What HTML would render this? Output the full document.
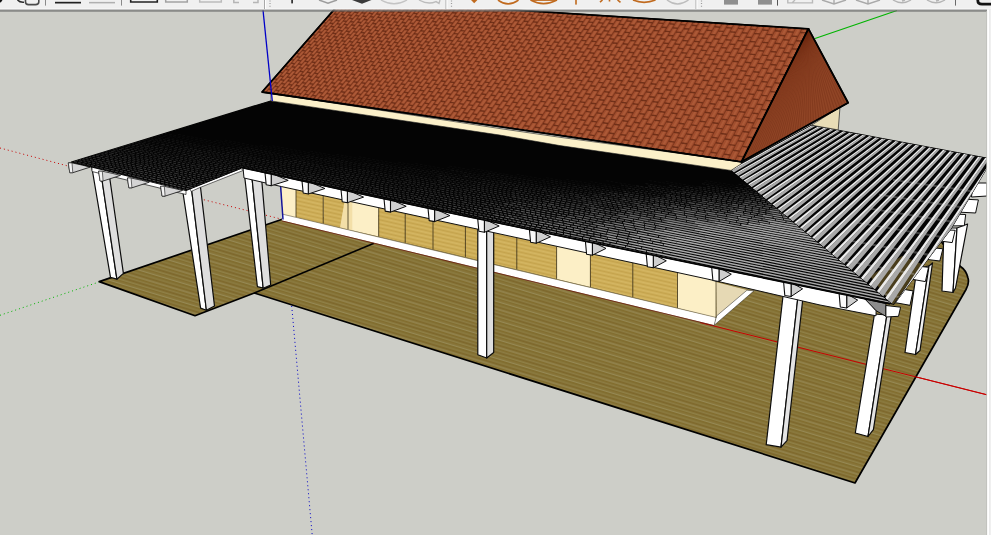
<!DOCTYPE html>
<html lang="en">
<head>
<meta charset="utf-8">
<title>SketchUp - pavilion model</title>
<style>
html,body{margin:0;padding:0;background:#cdcec8;overflow:hidden;font-family:"Liberation Sans",sans-serif;}
#view{display:block;width:991px;height:535px;}
</style>
</head>
<body>
<svg id="view" width="991" height="535" viewBox="0 0 991 535" shape-rendering="geometricPrecision">
<defs>
<pattern id="deck" width="60" height="19" patternUnits="userSpaceOnUse" patternTransform="matrix(1 0.30 0 1 0 0)"><rect width="60" height="19" fill="#867336"/><rect y="0" width="60" height="1" fill="#968955"/><rect y="1.4" width="60" height="1.1" fill="#7f6a2b"/><rect y="3.6" width="60" height="0.8" fill="#8e7f47"/><rect y="5.2" width="60" height="1.2" fill="#7d672a"/><rect y="7.5" width="60" height="1.0" fill="#9a8d5c"/><rect y="9" width="60" height="0.9" fill="#826c2d"/><rect y="11" width="60" height="0.8" fill="#8f8048"/><rect y="12.6" width="60" height="1.3" fill="#7c662a"/><rect y="14.8" width="60" height="0.9" fill="#93854f"/><rect y="16.4" width="60" height="1.0" fill="#806a2c"/><rect y="17.8" width="60" height="0.7" fill="#8c7c44"/></pattern>
<pattern id="wood" width="40" height="4" patternUnits="userSpaceOnUse" patternTransform="matrix(1 0.23 0 1 0 0)"><rect width="40" height="4" fill="#ceae58"/><rect y="0" width="40" height="0.8" fill="#c2a04a"/><rect y="2" width="40" height="0.8" fill="#d6b866"/></pattern>
</defs>
<rect x="0" y="0" width="991" height="535" fill="#cdcec8"/>
<line x1="0.0" y1="148.0" x2="68.0" y2="166.0" stroke="#c80000" stroke-width="1" stroke-dasharray="1 3"/>
<line x1="200.0" y1="198.8" x2="283.0" y2="219.5" stroke="#c80000" stroke-width="1" stroke-dasharray="1 3"/>
<line x1="0.0" y1="315.3" x2="99.0" y2="282.0" stroke="#00b400" stroke-width="1" stroke-dasharray="1 3"/>
<line x1="291.7" y1="306.0" x2="312.2" y2="535.0" stroke="#0000c8" stroke-width="1" stroke-dasharray="1 3"/>
<line x1="815.0" y1="38.5" x2="897.0" y2="10.5" stroke="#00b400" stroke-width="1.2" />
<line x1="700.0" y1="322.5" x2="987.0" y2="394.8" stroke="#c80000" stroke-width="1.0" />
<path d="M99.2,281.6 L195.0,315.7 L254.3,293.0 L855.0,483.0 L966,289.5 Q969.5,283 968,278 Q966,270 960.5,266.5 L940,240 L900,200 L283,219 Z" fill="url(#deck)" stroke="#000" stroke-width="1.7" stroke-linejoin="round"/>
<line x1="254.3" y1="293.0" x2="374.0" y2="243.3" stroke="#000" stroke-width="1.6" />
<line x1="700.0" y1="322.5" x2="987.0" y2="394.8" stroke="#c80000" stroke-width="1.0" />
<polygon points="281.6,178.9 296.0,182.1 296.0,217.4 281.6,214.0" fill="#fcefc6" stroke="none" stroke-width="1" stroke-linejoin="round" />
<polygon points="296.0,182.1 323.2,188.1 323.2,223.7 296.0,217.4" fill="url(#wood)" stroke="none" stroke-width="1" stroke-linejoin="round" />
<polygon points="323.2,188.1 348.0,193.6 348.0,229.5 323.2,223.7" fill="url(#wood)" stroke="none" stroke-width="1" stroke-linejoin="round" />
<polygon points="348.0,193.6 378.7,200.1 378.7,236.6 348.0,229.5" fill="#fcefc6" stroke="none" stroke-width="1" stroke-linejoin="round" />
<polygon points="378.7,200.1 405.2,205.8 405.2,242.8 378.7,236.6" fill="url(#wood)" stroke="none" stroke-width="1" stroke-linejoin="round" />
<polygon points="405.2,205.8 433.0,211.7 433.0,249.3 405.2,242.8" fill="url(#wood)" stroke="none" stroke-width="1" stroke-linejoin="round" />
<polygon points="433.0,211.7 465.4,218.6 465.4,256.9 433.0,249.3" fill="url(#wood)" stroke="none" stroke-width="1" stroke-linejoin="round" />
<polygon points="465.4,218.6 516.8,229.4 516.8,269.3 465.4,256.9" fill="url(#wood)" stroke="none" stroke-width="1" stroke-linejoin="round" />
<polygon points="516.8,229.4 556.6,237.7 556.6,278.9 516.8,269.3" fill="url(#wood)" stroke="none" stroke-width="1" stroke-linejoin="round" />
<polygon points="556.6,237.7 590.4,244.8 590.4,287.1 556.6,278.9" fill="#fcefc6" stroke="none" stroke-width="1" stroke-linejoin="round" />
<polygon points="590.4,244.8 632.8,253.5 632.8,297.3 590.4,287.1" fill="url(#wood)" stroke="none" stroke-width="1" stroke-linejoin="round" />
<polygon points="632.8,253.5 677.5,262.7 677.5,308.1 632.8,297.3" fill="url(#wood)" stroke="none" stroke-width="1" stroke-linejoin="round" />
<polygon points="677.5,262.7 716.0,270.6 716.0,317.4 677.5,308.1" fill="#fcefc6" stroke="none" stroke-width="1" stroke-linejoin="round" />
<polygon points="344.7,200.3 352.3,201.9 352.3,230.5 340.0,227.6" fill="#f3dfa8" stroke="none" stroke-width="1" stroke-linejoin="round" />
<line x1="296.0" y1="189.7" x2="296.0" y2="217.4" stroke="#3a3018" stroke-width="0.8" />
<line x1="323.2" y1="195.6" x2="323.2" y2="223.7" stroke="#3a3018" stroke-width="0.8" />
<line x1="348.0" y1="201.0" x2="348.0" y2="229.5" stroke="#3a3018" stroke-width="0.8" />
<line x1="378.7" y1="207.7" x2="378.7" y2="236.6" stroke="#3a3018" stroke-width="0.8" />
<line x1="405.2" y1="213.4" x2="405.2" y2="242.8" stroke="#3a3018" stroke-width="0.8" />
<line x1="433.0" y1="219.4" x2="433.0" y2="249.3" stroke="#3a3018" stroke-width="0.8" />
<line x1="465.4" y1="226.5" x2="465.4" y2="256.9" stroke="#3a3018" stroke-width="0.8" />
<line x1="516.8" y1="237.6" x2="516.8" y2="269.3" stroke="#3a3018" stroke-width="0.8" />
<line x1="556.6" y1="246.3" x2="556.6" y2="278.9" stroke="#3a3018" stroke-width="0.8" />
<line x1="590.4" y1="253.6" x2="590.4" y2="287.1" stroke="#3a3018" stroke-width="0.8" />
<line x1="632.8" y1="262.8" x2="632.8" y2="297.3" stroke="#3a3018" stroke-width="0.8" />
<line x1="677.5" y1="272.5" x2="677.5" y2="308.1" stroke="#3a3018" stroke-width="0.8" />
<polygon points="281.9,214.1 716.0,317.4 714.2,325.2 281.9,220.4" fill="#ffffff" stroke="none" stroke-width="1" stroke-linejoin="round" />
<line x1="281.9" y1="220.9" x2="714.2" y2="325.6" stroke="#6a1a12" stroke-width="0.8" />
<line x1="281.9" y1="214.0" x2="716.0" y2="317.4" stroke="#6b6248" stroke-width="0.6" />
<line x1="280.6" y1="186.0" x2="283.0" y2="219.5" stroke="#14149a" stroke-width="1.5" />
<polygon points="716.0,282.0 748.0,290.3 716.5,317.0" fill="#e6d9b4" stroke="none" stroke-width="1" stroke-linejoin="round" />
<polygon points="714.2,325.2 716.5,316.0 747.0,290.2 754.0,290.8" fill="#ffffff" stroke="#222" stroke-width="0.5" stroke-linejoin="round" />
<line x1="716.0" y1="281.0" x2="716.0" y2="318.0" stroke="#54492c" stroke-width="0.8" />
<polygon points="944.0,228.0 957.0,228.0 953.0,292.5 942.0,291.0" fill="#ffffff" stroke="#0c0c0c" stroke-width="1.2" stroke-linejoin="round" />
<polygon points="957.0,228.0 967.6,224.0 955.5,288.0 953.0,292.5" fill="#ffffff" stroke="#0c0c0c" stroke-width="1.2" stroke-linejoin="round" />
<polygon points="917.0,268.0 929.0,266.0 915.5,354.5 905.0,352.5" fill="#ffffff" stroke="#0c0c0c" stroke-width="1.2" stroke-linejoin="round" />
<polygon points="929.0,266.0 932.5,263.0 920.0,350.5 915.5,354.5" fill="#f2f2f2" stroke="#0c0c0c" stroke-width="1.2" stroke-linejoin="round" />
<polygon points="91.6,166.0 100.5,170.0 116.9,279.2 110.5,277.4" fill="#ffffff" stroke="#0c0c0c" stroke-width="1.2" stroke-linejoin="round" />
<polygon points="100.5,170.0 109.3,175.0 123.4,273.4 116.9,279.2" fill="#dedede" stroke="#0c0c0c" stroke-width="1.2" stroke-linejoin="round" />
<polygon points="182.4,189.0 191.3,187.0 206.4,310.2 200.6,308.1" fill="#ffffff" stroke="#0c0c0c" stroke-width="1.2" stroke-linejoin="round" />
<polygon points="191.3,187.0 200.0,183.0 214.5,306.0 206.4,310.2" fill="#dedede" stroke="#0c0c0c" stroke-width="1.2" stroke-linejoin="round" />
<polygon points="243.8,169.0 251.4,172.0 263.2,288.2 257.4,286.7" fill="#ffffff" stroke="#0c0c0c" stroke-width="1.2" stroke-linejoin="round" />
<polygon points="251.4,172.0 261.4,176.0 270.7,285.0 263.2,288.2" fill="#dedede" stroke="#0c0c0c" stroke-width="1.2" stroke-linejoin="round" />
<polygon points="477.8,220.0 486.7,222.0 486.7,358.0 477.8,354.7" fill="#ffffff" stroke="#0c0c0c" stroke-width="1.2" stroke-linejoin="round" />
<polygon points="486.7,222.0 493.7,222.0 493.7,352.5 486.7,358.0" fill="#dedede" stroke="#0c0c0c" stroke-width="1.2" stroke-linejoin="round" />
<polygon points="783.0,296.0 797.8,298.0 781.0,447.2 766.2,444.7" fill="#ffffff" stroke="#0c0c0c" stroke-width="1.2" stroke-linejoin="round" />
<polygon points="797.8,298.0 802.9,298.0 787.0,440.7 781.0,447.2" fill="#e4e4e4" stroke="#0c0c0c" stroke-width="1.2" stroke-linejoin="round" />
<polygon points="874.5,314.0 886.9,315.0 868.0,436.5 855.3,433.0" fill="#ffffff" stroke="#0c0c0c" stroke-width="1.2" stroke-linejoin="round" />
<polygon points="886.9,315.0 891.3,315.0 873.4,429.6 868.0,436.5" fill="#e4e4e4" stroke="#0c0c0c" stroke-width="1.2" stroke-linejoin="round" />
<polygon points="92.0,166.0 186.0,189.0 186.0,194.5 92.0,171.5" fill="#ffffff" stroke="#111" stroke-width="0.7" stroke-linejoin="round" />
<polygon points="190.0,188.5 241.0,168.5 243.0,170.5 200.0,187.5 191.0,191.5" fill="#ffffff" stroke="#111" stroke-width="0.6" stroke-linejoin="round" />
<polygon points="243.0,167.9 350.0,191.5 460.0,215.0 586.0,241.4 710.0,266.9 866.0,299.0 876.1,310.7 876.0,315.8 820.0,305.0 710.0,279.6 460.0,225.3 281.6,186.6 244.0,178.0" fill="#ffffff" stroke="#111" stroke-width="1.0" stroke-linejoin="round" />
<polygon points="68.3,162.9 69.8,172.7 72.8,172.7 90.2,167.1 82.6,165.2 72.0,162.9" fill="#d4d4d4" stroke="#111" stroke-width="0.8" stroke-linejoin="round" />
<polygon points="68.3,162.9 69.8,172.7 72.8,172.7 72.0,162.9" fill="#f4f4f4" stroke="#111" stroke-width="0.6" stroke-linejoin="round" />
<polygon points="98.6,171.2 100.1,181.0 103.1,181.0 120.5,175.4 112.9,173.5 102.3,171.2" fill="#d4d4d4" stroke="#111" stroke-width="0.8" stroke-linejoin="round" />
<polygon points="98.6,171.2 100.1,181.0 103.1,181.0 102.3,171.2" fill="#f4f4f4" stroke="#111" stroke-width="0.6" stroke-linejoin="round" />
<polygon points="127.4,178.0 128.9,187.8 131.9,187.8 149.3,182.2 141.7,180.3 131.1,178.0" fill="#d4d4d4" stroke="#111" stroke-width="0.8" stroke-linejoin="round" />
<polygon points="127.4,178.0 128.9,187.8 131.9,187.8 131.1,178.0" fill="#f4f4f4" stroke="#111" stroke-width="0.6" stroke-linejoin="round" />
<polygon points="160.6,186.3 162.1,196.1 165.1,196.1 182.5,190.5 174.9,188.6 164.3,186.3" fill="#d4d4d4" stroke="#111" stroke-width="0.8" stroke-linejoin="round" />
<polygon points="160.6,186.3 162.1,196.1 165.1,196.1 164.3,186.3" fill="#f4f4f4" stroke="#111" stroke-width="0.6" stroke-linejoin="round" />
<polygon points="271.2,173.2 288.2,180.4 271.2,185.7" fill="#cfcfcf" stroke="#0c0c0c" stroke-width="1.0" stroke-linejoin="round" />
<polygon points="265.0,172.7 271.2,173.7 271.2,185.7 266.2,184.7" fill="#fafafa" stroke="#0c0c0c" stroke-width="1.1" stroke-linejoin="round" />
<polygon points="308.3,181.4 324.9,188.5 308.3,194.0" fill="#cfcfcf" stroke="#0c0c0c" stroke-width="1.0" stroke-linejoin="round" />
<polygon points="302.0,180.9 308.3,181.9 308.3,194.0 303.2,193.0" fill="#fafafa" stroke="#0c0c0c" stroke-width="1.1" stroke-linejoin="round" />
<polygon points="347.4,190.0 363.6,197.1 347.4,202.7" fill="#cfcfcf" stroke="#0c0c0c" stroke-width="1.0" stroke-linejoin="round" />
<polygon points="341.0,189.5 347.4,190.5 347.4,202.7 342.2,201.7" fill="#fafafa" stroke="#0c0c0c" stroke-width="1.1" stroke-linejoin="round" />
<polygon points="390.5,199.3 406.2,206.3 390.5,212.1" fill="#cfcfcf" stroke="#0c0c0c" stroke-width="1.0" stroke-linejoin="round" />
<polygon points="384.0,198.8 390.5,199.8 390.5,212.1 385.2,211.1" fill="#fafafa" stroke="#0c0c0c" stroke-width="1.1" stroke-linejoin="round" />
<polygon points="434.6,208.7 449.9,215.6 434.6,221.6" fill="#cfcfcf" stroke="#0c0c0c" stroke-width="1.0" stroke-linejoin="round" />
<polygon points="428.0,208.2 434.6,209.2 434.6,221.6 429.2,220.6" fill="#fafafa" stroke="#0c0c0c" stroke-width="1.1" stroke-linejoin="round" />
<polygon points="484.4,219.2 499.2,226.0 484.4,232.3" fill="#cfcfcf" stroke="#0c0c0c" stroke-width="1.0" stroke-linejoin="round" />
<polygon points="477.7,218.7 484.4,219.7 484.4,232.3 478.9,231.3" fill="#fafafa" stroke="#0c0c0c" stroke-width="1.1" stroke-linejoin="round" />
<polygon points="536.2,230.0 550.5,236.8 536.2,243.3" fill="#cfcfcf" stroke="#0c0c0c" stroke-width="1.0" stroke-linejoin="round" />
<polygon points="529.4,229.5 536.2,230.5 536.2,243.3 530.6,242.3" fill="#fafafa" stroke="#0c0c0c" stroke-width="1.1" stroke-linejoin="round" />
<polygon points="592.4,241.8 606.0,248.4 592.4,255.2" fill="#cfcfcf" stroke="#0c0c0c" stroke-width="1.0" stroke-linejoin="round" />
<polygon points="585.4,241.3 592.4,242.3 592.4,255.2 586.6,254.2" fill="#fafafa" stroke="#0c0c0c" stroke-width="1.1" stroke-linejoin="round" />
<polygon points="653.3,254.3 666.3,260.8 653.3,267.8" fill="#cfcfcf" stroke="#0c0c0c" stroke-width="1.0" stroke-linejoin="round" />
<polygon points="646.2,253.8 653.3,254.8 653.3,267.8 647.4,266.8" fill="#fafafa" stroke="#0c0c0c" stroke-width="1.1" stroke-linejoin="round" />
<polygon points="719.0,267.7 731.3,274.2 719.0,281.5" fill="#cfcfcf" stroke="#0c0c0c" stroke-width="1.0" stroke-linejoin="round" />
<polygon points="711.7,267.2 719.0,268.2 719.0,281.5 712.9,280.5" fill="#fafafa" stroke="#0c0c0c" stroke-width="1.1" stroke-linejoin="round" />
<polygon points="791.1,282.5 802.6,288.8 791.1,296.5" fill="#cfcfcf" stroke="#0c0c0c" stroke-width="1.0" stroke-linejoin="round" />
<polygon points="783.6,282.0 791.1,283.0 791.1,296.5 784.8,295.5" fill="#fafafa" stroke="#0c0c0c" stroke-width="1.1" stroke-linejoin="round" />
<polygon points="846.7,293.9 857.7,300.1 846.7,308.0" fill="#cfcfcf" stroke="#0c0c0c" stroke-width="1.0" stroke-linejoin="round" />
<polygon points="839.1,293.4 846.7,294.4 846.7,308.0 840.3,307.0" fill="#fafafa" stroke="#0c0c0c" stroke-width="1.1" stroke-linejoin="round" />
<polygon points="864.9,299.0 885.9,303.5 885.9,316.3 876.1,310.7" fill="#8c8c8c" stroke="#0c0c0c" stroke-width="1.0" stroke-linejoin="round" />
<polygon points="885.9,305.5 900.6,307.2 898.5,316.3 885.9,317.0" fill="#ffffff" stroke="#0c0c0c" stroke-width="1.0" stroke-linejoin="round" />
<polygon points="973.0,183.0 987.0,183.0 987.0,196.0 971.5,197.0" fill="#ffffff" stroke="#0c0c0c" stroke-width="1.0" stroke-linejoin="round" />
<polygon points="959.4,198.9 978.4,199.9 975.6,213.0 956.6,212.0" fill="#ffffff" stroke="#0c0c0c" stroke-width="1.0" stroke-linejoin="round" />
<polygon points="949.5,214.0 965.7,214.5 964.3,225.7 948.1,226.0" fill="#ffffff" stroke="#0c0c0c" stroke-width="1.0" stroke-linejoin="round" />
<polygon points="935.9,229.3 955.2,230.3 952.2,242.6 936.9,240.6" fill="#ffffff" stroke="#0c0c0c" stroke-width="1.0" stroke-linejoin="round" />
<polygon points="924.6,246.8 942.9,248.8 939.8,261.0 923.5,259.0" fill="#ffffff" stroke="#0c0c0c" stroke-width="1.0" stroke-linejoin="round" />
<polygon points="910.2,265.3 928.5,267.3 925.4,281.6 908.1,278.6" fill="#ffffff" stroke="#0c0c0c" stroke-width="1.0" stroke-linejoin="round" />
<polygon points="894.8,287.9 913.1,290.9 910.0,305.3 892.7,302.2" fill="#ffffff" stroke="#0c0c0c" stroke-width="1.0" stroke-linejoin="round" />
<clipPath id="cpMain"><polygon points="71.4,162.0 270.7,101.0 271.4,100.8 500.0,134.9 560.0,145.4 730.5,170.0 731.5,170.6 892.0,303.8 710.0,266.4 586.0,240.9 460.0,214.5 350.0,191.0 240.5,166.8 240.5,168.5 186.0,190.5"/></clipPath>
<polygon points="71.4,162.0 270.7,101.0 271.4,100.8 500.0,134.9 560.0,145.4 730.5,170.0 731.5,170.6 892.0,303.8 710.0,266.4 586.0,240.9 460.0,214.5 350.0,191.0 240.5,166.8 240.5,168.5 186.0,190.5" fill="#040404" stroke="#040404" stroke-width="1.2" stroke-linejoin="round" />
<g clip-path="url(#cpMain)" fill="none">
<path d="M743.9,181.4L778.6,186.9M740.6,182.7L771.7,187.6M705.5,180.7L746.3,187.2M703.7,182.2L735.4,187.3M665.8,181.5L698.7,186.9M649.2,180.6L685.8,186.6M606.2,180.7L636.2,185.8M590.3,181.6L627.8,188.1M566.4,179.4L604.2,185.9M546.1,177.7L587.8,185.0M516.6,174.4L550.7,180.4M472.6,168.4L505.8,174.3M505.8,174.3L541.9,180.7M449.2,166.0L488.1,173.0M447.4,167.5L482.4,173.8M415.4,163.5L451.1,170.0M398.2,162.1L429.7,167.9M429.7,167.9L462.7,173.9M358.8,156.7L396.9,163.7M396.9,163.7L431.9,170.1M336.3,154.3L369.0,160.3M369.0,160.3L404.0,166.8M310.2,151.1L344.2,157.5M344.2,157.5L376.2,163.4M272.4,145.8L302.9,151.5M302.9,151.5L333.3,157.2M333.3,157.2L364.1,163.0M260.2,145.1L294.9,151.7M294.9,151.7L327.9,157.9M224.6,140.0L265.2,147.8M265.2,147.8L307.0,155.7M215.6,140.0L256.2,147.7M256.2,147.7L293.1,154.8M178.0,134.3L213.4,141.2M213.4,141.2L246.5,147.6M164.7,133.4L201.3,140.5M201.3,140.5L238.9,147.8M160.1,134.1L195.6,141.0M195.6,141.0L227.5,147.3M132.4,130.2L167.1,137.1M167.1,137.1L207.9,145.1M98.7,125.1L130.1,131.4M130.1,131.4L167.3,138.8M92.0,125.4L128.1,132.6M128.1,132.6L158.6,138.7M72.8,123.0L103.6,129.3M103.6,129.3L137.8,136.2M37.1,117.3L71.4,124.3M71.4,124.3L111.9,132.6M36.1,118.7L69.9,125.6M69.9,125.6L99.9,131.7M56.6,124.4L94.2,132.2" stroke="#d2d2d2" stroke-opacity="0.04" stroke-width="1.0" stroke-dasharray="3 1.4"/>
<path d="M816.4,185.5L849.8,190.6M849.8,190.6L881.6,195.5M798.2,184.5L836.9,190.5M788.5,184.8L826.3,190.7M738.5,184.2L780.3,190.8M701.9,183.7L737.4,189.5M645.5,183.6L681.5,189.6M620.9,185.0L651.4,190.2M604.2,185.9L635.1,191.3M587.8,185.0L623.2,191.1M550.7,180.4L584.5,186.3M541.9,180.7L574.2,186.4M488.1,173.0L529.8,180.4M529.8,180.4L562.9,186.3M482.4,173.8L517.4,180.1M517.4,180.1L553.7,186.6M451.1,170.0L488.1,176.7M488.1,176.7L518.1,182.1M462.7,173.9L500.3,180.8M431.9,170.1L465.0,176.2M404.0,166.8L442.0,173.8M442.0,173.8L483.4,181.5M376.2,163.4L406.3,169.0M406.3,169.0L439.6,175.2M364.1,163.0L405.1,170.7M405.1,170.7L438.2,176.9M327.9,157.9L363.0,164.6M363.0,164.6L399.0,171.3M399.0,171.3L440.1,179.1M307.0,155.7L340.2,162.0M340.2,162.0L371.2,167.9M371.2,167.9L402.4,173.9M293.1,154.8L327.0,161.3M327.0,161.3L361.8,168.0M361.8,168.0L403.7,176.0M246.5,147.6L285.8,155.2M285.8,155.2L327.2,163.2M327.2,163.2L358.5,169.2M238.9,147.8L270.0,153.9M270.0,153.9L302.0,160.1M302.0,160.1L340.3,167.5M227.5,147.3L257.7,153.2M257.7,153.2L294.3,160.4M207.9,145.1L245.4,152.5M245.4,152.5L285.3,160.4M167.3,138.8L203.9,146.1M203.9,146.1L241.4,153.5M241.4,153.5L275.1,160.2M158.6,138.7L196.3,146.2M196.3,146.2L227.2,152.4M137.8,136.2L176.9,144.0M176.9,144.0L208.8,150.5M111.9,132.6L148.5,140.0M148.5,140.0L185.5,147.5M99.9,131.7L130.3,138.0M130.3,138.0L162.1,144.5M94.2,132.2L134.7,140.5M134.7,140.5L174.1,148.7M54.9,125.6L87.3,132.4M87.3,132.4L124.6,140.1M35.0,123.1L75.1,131.5M75.1,131.5L113.7,139.6M35.1,124.7L73.0,132.7M73.0,132.7L114.8,141.5M33.5,125.9L64.3,132.5M44.7,129.9L75.0,136.4M24.8,127.3L54.8,133.8" stroke="#d2d2d2" stroke-opacity="0.08" stroke-width="1.0" stroke-dasharray="3 1.4"/>
<path d="M881.6,195.5L913.0,200.3M836.9,190.5L870.4,195.6M870.4,195.6L912.1,202.0M787.6,186.5L828.2,192.8M778.6,186.9L813.4,192.3M771.7,187.6L802.9,192.5M746.3,187.2L786.4,193.6M735.4,187.3L775.3,193.7M707.4,186.5L743.5,192.3M698.7,186.9L729.6,192.0M685.8,186.6L721.1,192.4M669.4,185.7L704.5,191.6M648.2,185.9L682.4,191.7M636.2,185.8L670.8,191.6M627.8,188.1L665.9,194.7M584.5,186.3L624.6,193.4M574.2,186.4L608.7,192.5M562.9,186.3L600.8,193.1M553.7,186.6L588.2,192.8M518.1,182.1L552.8,188.4M500.3,180.8L538.7,187.8M465.0,176.2L503.0,183.2M483.4,181.5L515.1,187.3M439.6,175.2L473.8,181.6M438.2,176.9L477.2,184.2M440.1,179.1L472.3,185.2M402.4,173.9L438.4,180.7M403.7,176.0L439.8,182.9M358.5,169.2L395.6,176.4M395.6,176.4L433.0,183.6M340.3,167.5L375.3,174.3M375.3,174.3L408.7,180.8M294.3,160.4L332.0,167.8M332.0,167.8L372.9,175.8M372.9,175.8L404.0,181.9M285.3,160.4L317.2,166.7M317.2,166.7L356.6,174.5M356.6,174.5L389.3,180.9M275.1,160.2L310.1,167.2M310.1,167.2L347.1,174.5M227.2,152.4L266.0,160.2M266.0,160.2L305.4,168.1M305.4,168.1L341.5,175.3M208.8,150.5L249.5,158.7M249.5,158.7L282.8,165.4M282.8,165.4L322.6,173.5M185.5,147.5L226.1,155.8M226.1,155.8L257.4,162.1M257.4,162.1L299.3,170.7M162.1,144.5L199.5,152.1M199.5,152.1L234.7,159.3M234.7,159.3L270.8,166.7M174.1,148.7L208.9,155.8M208.9,155.8L242.0,162.7M124.6,140.1L160.7,147.6M160.7,147.6L198.4,155.5M113.7,139.6L146.9,146.5M146.9,146.5L183.5,154.2M114.8,141.5L150.4,149.0M150.4,149.0L190.5,157.5M64.3,132.5L101.4,140.4M101.4,140.4L135.7,147.7M135.7,147.7L175.5,156.1M75.0,136.4L108.1,143.5M108.1,143.5L141.5,150.7M54.8,133.8L90.7,141.5M90.7,141.5L126.6,149.3M56.9,135.9L97.6,144.7M55.5,137.3L91.0,145.1M44.3,136.5L76.7,143.7" stroke="#d2d2d2" stroke-opacity="0.12" stroke-width="1.0" stroke-dasharray="3 1.4"/>
<path d="M826.3,190.7L868.2,197.1M868.2,197.1L908.0,203.3M828.2,192.8L869.7,199.2M737.4,189.5L774.4,195.5M681.5,189.6L713.6,195.0M651.4,190.2L691.4,197.1M635.1,191.3L666.9,196.8M623.2,191.1L656.4,197.0M552.8,188.4L593.9,195.8M538.7,187.8L570.1,193.5M503.0,183.2L544.1,190.7M515.1,187.3L549.9,193.7M473.8,181.6L515.3,189.3M477.2,184.2L518.0,191.8M472.3,185.2L511.9,192.7M438.4,180.7L476.9,188.0M439.8,182.9L472.6,189.2M433.0,183.6L465.7,189.9M408.7,180.8L442.3,187.4M404.0,181.9L441.5,189.2M389.3,180.9L424.1,187.8M347.1,174.5L382.2,181.5M382.2,181.5L420.1,189.1M341.5,175.3L372.2,181.5M372.2,181.5L408.2,188.7M322.6,173.5L354.3,179.9M354.3,179.9L390.4,187.1M299.3,170.7L336.8,178.3M336.8,178.3L371.6,185.4M270.8,166.7L311.6,175.1M311.6,175.1L343.1,181.6M242.0,162.7L272.2,168.9M272.2,168.9L309.9,176.7M198.4,155.5L238.1,163.7M238.1,163.7L270.2,170.4M270.2,170.4L303.9,177.4M183.5,154.2L218.7,161.6M218.7,161.6L258.2,169.8M190.5,157.5L228.9,165.6M228.9,165.6L269.2,174.1M175.5,156.1L215.4,164.6M141.5,150.7L180.1,158.9M180.1,158.9L214.5,166.3M126.6,149.3L166.2,157.8M166.2,157.8L198.4,164.8M97.6,144.7L127.9,151.3M127.9,151.3L160.3,158.4M91.0,145.1L131.6,154.0M131.6,154.0L164.5,161.2M76.7,143.7L114.4,152.0M114.4,152.0L145.6,158.9M32.1,135.5L70.5,144.1M70.5,144.1L110.8,153.0M24.9,135.6L55.4,142.4M55.4,142.4L91.9,150.6M45.6,142.0L75.8,148.8M30.5,140.3L70.3,149.4" stroke="#d2d2d2" stroke-opacity="0.16" stroke-width="1.0" stroke-dasharray="3 1.4"/>
<path d="M588.2,192.8L622.2,198.9" stroke="#d2d2d2" stroke-opacity="0.16" stroke-width="1.1" stroke-dasharray="4 1.2"/>
<path d="M869.7,199.2L901.5,204.2M813.4,192.3L844.6,197.2M780.3,190.8L820.6,197.2M704.5,191.6L735.4,196.7M544.1,190.7L576.9,196.7M515.3,189.3L546.8,195.2M518.0,191.8L552.0,198.2M476.9,188.0L512.2,194.8M472.6,189.2L512.3,196.8M465.7,189.9L500.1,196.5M442.3,187.4L483.8,195.4M441.5,189.2L475.9,196.0M424.1,187.8L464.3,195.8M420.1,189.1L455.5,196.1M408.2,188.7L442.7,195.6M390.4,187.1L431.4,195.4M371.6,185.4L411.1,193.4M411.1,193.4L444.3,200.1M343.1,181.6L375.9,188.3M375.9,188.3L413.7,196.0M309.9,176.7L346.7,184.3M346.7,184.3L380.9,191.4M303.9,177.4L337.5,184.4M337.5,184.4L368.1,190.8M258.2,169.8L294.5,177.4M294.5,177.4L327.7,184.4M327.7,184.4L365.4,192.3M269.2,174.1L304.4,181.5M304.4,181.5L343.1,189.7M215.4,164.6L256.1,173.3M256.1,173.3L286.8,179.8M214.5,166.3L248.3,173.6M248.3,173.6L289.9,182.5M198.4,164.8L234.3,172.5M234.3,172.5L268.5,179.9M160.3,158.4L193.5,165.6M193.5,165.6L234.3,174.5M164.5,161.2L196.8,168.3M196.8,168.3L230.4,175.6M145.6,158.9L178.1,166.1M178.1,166.1L212.8,173.7M110.8,153.0L148.9,161.5M148.9,161.5L186.6,169.9M91.9,150.6L123.8,157.8M123.8,157.8L163.2,166.6M75.8,148.8L110.8,156.7M110.8,156.7L145.8,164.7M70.3,149.4L105.9,157.5M105.9,157.5L139.5,165.1M57.9,148.4L97.9,157.5M27.8,143.2L67.3,152.4M67.3,152.4L107.3,161.6M29.7,145.5L64.2,153.5" stroke="#d2d2d2" stroke-opacity="0.20" stroke-width="1.0" stroke-dasharray="3 1.4"/>
<path d="M743.5,192.3L780.2,198.3M729.6,192.0L767.6,198.2M721.1,192.4L751.3,197.4M682.4,191.7L713.1,196.9M670.8,191.6L706.5,197.7M624.6,193.4L654.6,198.6M608.7,192.5L650.2,199.8M600.8,193.1L634.4,199.1M570.1,193.5L600.9,199.1M549.9,193.7L582.4,199.8" stroke="#d2d2d2" stroke-opacity="0.20" stroke-width="1.1" stroke-dasharray="4 1.2"/>
<path d="M844.6,197.2L882.2,203.1M802.9,192.5L837.0,197.9M511.9,192.7L550.8,200.0M512.2,194.8L545.1,201.0M500.1,196.5L531.8,202.7M483.8,195.4L517.5,202.0M475.9,196.0L512.0,203.0M464.3,195.8L504.3,203.6M455.5,196.1L490.8,203.1M442.7,195.6L484.2,203.9M431.4,195.4L463.9,202.0M413.7,196.0L444.0,202.2M380.9,191.4L418.6,199.1M368.1,190.8L408.8,199.2M408.8,199.2L448.2,207.4M365.4,192.3L406.9,201.0M343.1,189.7L379.9,197.5M379.9,197.5L413.6,204.6M286.8,179.8L327.3,188.4M327.3,188.4L368.2,197.1M289.9,182.5L325.9,190.2M325.9,190.2L366.2,198.8M268.5,179.9L308.5,188.5M308.5,188.5L341.6,195.7M234.3,174.5L270.3,182.3M270.3,182.3L304.9,189.9M230.4,175.6L268.8,184.1M268.8,184.1L309.0,192.9M212.8,173.7L243.2,180.5M243.2,180.5L278.0,188.1M186.6,169.9L222.1,177.8M222.1,177.8L255.8,185.3M163.2,166.6L204.5,175.9M204.5,175.9L240.7,184.0M145.8,164.7L184.2,173.3M184.2,173.3L218.4,181.1M139.5,165.1L176.0,173.5M176.0,173.5L207.6,180.7M97.9,157.5L138.8,166.9M138.8,166.9L178.2,176.0M107.3,161.6L139.7,169.1M64.2,153.5L99.3,161.7M99.3,161.7L140.8,171.4M52.4,152.6L87.6,160.9M87.6,160.9L122.7,169.1M49.2,153.7L79.3,160.8M79.3,160.8L111.5,168.5M30.4,151.1L69.8,160.5M69.8,160.5L106.6,169.3M36.8,154.5L69.3,162.3" stroke="#d2d2d2" stroke-opacity="0.24" stroke-width="1.0" stroke-dasharray="3 1.4"/>
<path d="M882.2,203.1L913.0,207.9M837.0,197.9L870.2,203.1M786.4,193.6L822.1,199.3M775.3,193.7L817.1,200.4M713.6,195.0L747.7,200.7M665.9,194.7L701.8,200.9M666.9,196.8L699.9,202.5M656.4,197.0L688.9,202.6M593.9,195.8L633.8,203.0M576.9,196.7L607.3,202.3M546.8,195.2L588.4,202.9M552.0,198.2L585.3,204.4" stroke="#d2d2d2" stroke-opacity="0.24" stroke-width="1.1" stroke-dasharray="4 1.2"/>
<path d="M463.9,202.0L497.1,208.7M444.3,200.1L486.2,208.7M444.0,202.2L474.0,208.4M418.6,199.1L453.9,206.4M406.9,201.0L439.5,207.8M413.6,204.6L446.2,211.5M368.2,197.1L409.6,205.9M409.6,205.9L440.8,212.6M366.2,198.8L403.6,206.9M403.6,206.9L433.9,213.4M341.6,195.7L382.9,204.6M382.9,204.6L416.4,211.8M304.9,189.9L345.5,198.7M345.5,198.7L378.3,205.8M309.0,192.9L340.8,199.8M340.8,199.8L372.7,206.8M278.0,188.1L317.5,196.9M317.5,196.9L355.8,205.3M255.8,185.3L293.4,193.7M293.4,193.7L324.5,200.6M240.7,184.0L271.9,191.0M271.9,191.0L308.8,199.3M218.4,181.1L251.6,188.6M251.6,188.6L284.3,196.0M207.6,180.7L247.6,189.8M178.2,176.0L209.8,183.3M209.8,183.3L249.8,192.4M139.7,169.1L178.0,178.0M178.0,178.0L214.4,186.4M140.8,171.4L171.7,178.6M171.7,178.6L209.3,187.4M122.7,169.1L159.4,177.7M159.4,177.7L199.3,187.1M111.5,168.5L152.6,178.2M106.6,169.3L139.7,177.2M69.3,162.3L101.2,170.0M101.2,170.0L131.4,177.3M50.9,159.8L92.4,169.9M92.4,169.9L131.0,179.3" stroke="#d2d2d2" stroke-opacity="0.28" stroke-width="1.0" stroke-dasharray="3 1.4"/>
<path d="M870.2,203.1L910.1,209.4M820.6,197.2L860.2,203.5M774.4,195.5L815.2,202.1M735.4,196.7L776.6,203.6M713.1,196.9L744.6,202.2M706.5,197.7L742.5,203.8M691.4,197.1L732.1,204.1M654.6,198.6L693.6,205.5M634.4,199.1L671.1,205.6M622.2,198.9L653.0,204.4M600.9,199.1L637.2,205.7M582.4,199.8L624.1,207.5M588.4,202.9L620.8,209.0M550.8,200.0L590.7,207.6M545.1,201.0L580.1,207.7M512.3,196.8L550.1,204.1" stroke="#d2d2d2" stroke-opacity="0.28" stroke-width="1.1" stroke-dasharray="4 1.2"/>
<path d="M490.8,203.1L521.0,209.1M484.2,203.9L515.8,210.3M453.9,206.4L495.2,214.9M448.2,207.4L486.8,215.5M439.5,207.8L480.1,216.3M416.4,211.8L448.9,218.9M378.3,205.8L413.8,213.6M372.7,206.8L405.7,214.1M405.7,214.1L439.6,221.5M355.8,205.3L391.8,213.3M324.5,200.6L359.6,208.4M359.6,208.4L399.0,217.2M308.8,199.3L345.3,207.5M345.3,207.5L383.9,216.2M284.3,196.0L323.2,204.8M247.6,189.8L281.8,197.6M281.8,197.6L322.0,206.8M249.8,192.4L287.4,201.1M214.4,186.4L253.3,195.4M253.3,195.4L288.6,203.6M209.3,187.4L247.0,196.1M247.0,196.1L277.3,203.2M199.3,187.1L232.8,195.0M152.6,178.2L189.9,187.0M189.9,187.0L227.8,196.0M139.7,177.2L173.3,185.2M173.3,185.2L208.4,193.6M131.4,177.3L161.4,184.5M161.4,184.5L199.6,193.7M131.0,179.3L161.2,186.6" stroke="#d2d2d2" stroke-opacity="0.32" stroke-width="1.0" stroke-dasharray="3 1.4"/>
<path d="M860.2,203.5L900.1,209.8M822.1,199.3L859.9,205.4M780.2,198.3L819.3,204.7M767.6,198.2L807.1,204.7M751.3,197.4L785.3,203.0M650.2,199.8L690.8,207.0M607.3,202.3L641.3,208.5M585.3,204.4L626.8,212.2M550.1,204.1L592.0,212.1M531.8,202.7L564.2,208.9M517.5,202.0L554.3,209.2M512.0,203.0L543.7,209.3M504.3,203.6L536.4,210.0" stroke="#d2d2d2" stroke-opacity="0.32" stroke-width="1.1" stroke-dasharray="4 1.2"/>
<path d="M701.8,200.9L731.8,206.0M633.8,203.0L674.1,210.3" stroke="#d2d2d2" stroke-opacity="0.32" stroke-width="1.2" stroke-dasharray="6 1"/>
<path d="M486.2,208.7L523.1,216.2M474.0,208.4L508.3,215.4M446.2,211.5L483.7,219.4M440.8,212.6L473.3,219.5M433.9,213.4L468.9,220.9M413.8,213.6L450.2,221.5M391.8,213.3L429.4,221.6M399.0,217.2L437.5,225.8M383.9,216.2L420.1,224.3M323.2,204.8L364.5,214.1M364.5,214.1L400.8,222.3M322.0,206.8L355.2,214.3M355.2,214.3L389.7,222.2M287.4,201.1L317.6,208.0M317.6,208.0L347.7,214.9M288.6,203.6L329.2,213.0M277.3,203.2L314.6,211.9M232.8,195.0L272.7,204.4M272.7,204.4L307.6,212.6M227.8,196.0L267.3,205.4M208.4,193.6L242.2,201.7M242.2,201.7L277.3,210.1M199.6,193.7L231.1,201.3M161.2,186.6L191.3,193.9M191.3,193.9L229.2,203.1" stroke="#d2d2d2" stroke-opacity="0.36" stroke-width="1.0" stroke-dasharray="3 1.4"/>
<path d="M859.9,205.4L899.5,211.7M899.5,211.7L930.6,216.7M817.1,200.4L855.0,206.5M855.0,206.5L889.2,212.0M815.2,202.1L850.3,207.8M747.7,200.7L778.0,205.8M580.1,207.7L617.5,214.8M564.2,208.9L597.3,215.3M554.3,209.2L588.6,215.8M543.7,209.3L577.1,215.8M521.0,209.1L558.5,216.6M497.1,208.7L533.1,216.0" stroke="#d2d2d2" stroke-opacity="0.36" stroke-width="1.1" stroke-dasharray="4 1.2"/>
<path d="M744.6,202.2L775.5,207.4M699.9,202.5L738.8,209.3M688.9,202.6L730.2,209.9M653.0,204.4L686.3,210.4M637.2,205.7L674.2,212.4M624.1,207.5L655.8,213.3M590.7,207.6L629.9,215.0" stroke="#d2d2d2" stroke-opacity="0.36" stroke-width="1.2" stroke-dasharray="6 1"/>
<path d="M486.8,215.5L516.8,221.7M480.1,216.3L510.3,222.7M429.4,221.6L464.9,229.5M400.8,222.3L433.4,229.7M389.7,222.2L422.8,229.7M347.7,214.9L389.2,224.4M389.2,224.4L427.0,233.1M329.2,213.0L365.8,221.5M365.8,221.5L399.0,229.1M314.6,211.9L352.8,220.8M352.8,220.8L394.0,230.4M307.6,212.6L343.6,221.1M343.6,221.1L376.9,228.9M267.3,205.4L308.2,215.1M308.2,215.1L345.5,223.9M277.3,210.1L315.0,219.1M231.1,201.3L272.7,211.3M272.7,211.3L303.7,218.8M229.2,203.1L269.0,212.7" stroke="#d2d2d2" stroke-opacity="0.40" stroke-width="1.0" stroke-dasharray="3 1.4"/>
<path d="M536.4,210.0L569.1,216.4M515.8,210.3L556.1,218.3" stroke="#d2d2d2" stroke-opacity="0.40" stroke-width="1.1" stroke-dasharray="4 1.2"/>
<path d="M889.2,212.0L925.8,217.9M850.3,207.8L891.3,214.4M742.5,203.8L775.0,209.3M732.1,204.1L769.6,210.5M693.6,205.5L733.7,212.5M671.1,205.6L705.8,211.8M641.3,208.5L676.4,215.0M620.8,209.0L655.1,215.4M592.0,212.1L623.2,218.1" stroke="#d2d2d2" stroke-opacity="0.40" stroke-width="1.2" stroke-dasharray="6 1"/>
<path d="M483.7,219.4L514.6,225.9M473.3,219.5L504.7,226.1M468.9,220.9L504.1,228.4M448.9,218.9L487.3,227.2M450.2,221.5L489.2,230.0M439.6,221.5L475.8,229.5M437.5,225.8L475.1,234.2M420.1,224.3L457.7,232.7M399.0,229.1L431.8,236.7M394.0,230.4L428.0,238.4M376.9,228.9L412.9,237.4M345.5,223.9L382.9,232.8M382.9,232.8L420.4,241.7M315.0,219.1L356.2,228.9M356.2,228.9L386.9,236.2M303.7,218.8L344.2,228.5M269.0,212.7L299.9,220.2M299.9,220.2L333.7,228.4" stroke="#d2d2d2" stroke-opacity="0.44" stroke-width="1.0" stroke-dasharray="3 1.4"/>
<path d="M533.1,216.0L567.0,222.8M523.1,216.2L557.4,223.2M508.3,215.4L539.5,221.8M495.2,214.9L534.0,223.0" stroke="#d2d2d2" stroke-opacity="0.44" stroke-width="1.1" stroke-dasharray="4 1.2"/>
<path d="M891.3,214.4L927.3,220.2M819.3,204.7L860.3,211.4M860.3,211.4L895.6,217.1M807.1,204.7L847.8,211.4M785.3,203.0L822.8,209.2M776.6,203.6L814.2,209.8M778.0,205.8L811.0,211.3M731.8,206.0L771.4,212.8M690.8,207.0L730.5,214.1M626.8,212.2L664.2,219.2M597.3,215.3L634.5,222.5M588.6,215.8L623.6,222.6M577.1,215.8L613.4,222.9M569.1,216.4L603.9,223.3M558.5,216.6L594.3,223.7" stroke="#d2d2d2" stroke-opacity="0.44" stroke-width="1.2" stroke-dasharray="6 1"/>
<path d="M433.4,229.7L473.1,238.7M422.8,229.7L457.9,237.7M427.0,233.1L460.0,240.7M386.9,236.2L423.7,245.0M344.2,228.5L375.7,236.1M375.7,236.1L405.9,243.4M333.7,228.4L372.4,237.8M372.4,237.8L404.4,245.6" stroke="#d2d2d2" stroke-opacity="0.48" stroke-width="1.0" stroke-dasharray="3 1.4"/>
<path d="M510.3,222.7L543.4,229.6" stroke="#d2d2d2" stroke-opacity="0.48" stroke-width="1.1" stroke-dasharray="4 1.2"/>
<path d="M895.6,217.1L933.0,223.2M847.8,211.4L879.7,216.6M822.8,209.2L858.9,215.2M775.5,207.4L814.4,214.0M738.8,209.3L772.5,215.1M730.2,209.9L762.8,215.5M556.1,218.3L598.0,226.7" stroke="#d2d2d2" stroke-opacity="0.48" stroke-width="1.2" stroke-dasharray="6 1"/>
<path d="M686.3,210.4L727.9,217.9M674.1,210.3L715.8,217.8M674.2,212.4L708.9,218.8M655.8,213.3L686.4,219.0M629.9,215.0L667.2,222.0M617.5,214.8L655.6,222.1" stroke="#d2d2d2" stroke-opacity="0.48" stroke-width="1.3" stroke-dasharray="10 0.8"/>
<path d="M475.8,229.5L507.8,236.5M464.9,229.5L496.6,236.5M457.7,232.7L497.7,241.7M431.8,236.7L463.5,244.1M428.0,238.4L469.7,248.1M412.9,237.4L454.6,247.2M420.4,241.7L458.8,250.8M405.9,243.4L444.6,252.7M404.4,245.6L444.7,255.4" stroke="#d2d2d2" stroke-opacity="0.52" stroke-width="1.0" stroke-dasharray="3 1.4"/>
<path d="M534.0,223.0L567.0,229.8M516.8,221.7L557.0,230.1M504.7,226.1L535.1,232.6M487.3,227.2L523.3,234.9" stroke="#d2d2d2" stroke-opacity="0.52" stroke-width="1.1" stroke-dasharray="4 1.2"/>
<path d="M879.7,216.6L918.3,222.9M858.9,215.2L889.7,220.3M814.2,209.8L853.8,216.4M775.0,209.3L811.0,215.5M567.0,222.8L597.4,228.9M557.4,223.2L596.6,231.1M539.5,221.8L573.8,228.8" stroke="#d2d2d2" stroke-opacity="0.52" stroke-width="1.2" stroke-dasharray="6 1"/>
<path d="M733.7,212.5L765.1,218.1M705.8,211.8L737.8,217.5M676.4,215.0L714.6,222.0M655.1,215.4L695.0,222.8M623.2,218.1L658.9,224.9" stroke="#d2d2d2" stroke-opacity="0.52" stroke-width="1.3" stroke-dasharray="10 0.8"/>
<path d="M475.1,234.2L508.1,241.5M457.9,237.7L490.1,245.1M423.7,245.0L454.2,252.3" stroke="#d2d2d2" stroke-opacity="0.56" stroke-width="1.0" stroke-dasharray="3 1.4"/>
<path d="M514.6,225.9L555.5,234.5M504.1,228.4L543.4,236.8M489.2,230.0L528.3,238.5" stroke="#d2d2d2" stroke-opacity="0.56" stroke-width="1.1" stroke-dasharray="4 1.2"/>
<path d="M889.7,220.3L931.5,227.2M853.8,216.4L884.8,221.6M811.0,211.3L841.2,216.4" stroke="#d2d2d2" stroke-opacity="0.56" stroke-width="1.2" stroke-dasharray="6 1"/>
<path d="M769.6,210.5L808.4,217.1M730.5,214.1L768.1,220.7M613.4,222.9L654.5,231.0M603.9,223.3L640.1,230.4M594.3,223.7L627.2,230.2" stroke="#d2d2d2" stroke-opacity="0.56" stroke-width="1.3" stroke-dasharray="10 0.8"/>
<path d="M664.2,219.2L697.3,225.5" stroke="#d2d2d2" stroke-opacity="0.56" stroke-width="1.4" stroke-dasharray="none"/>
<path d="M473.1,238.7L507.8,246.5M460.0,240.7L491.2,247.9" stroke="#d2d2d2" stroke-opacity="0.60" stroke-width="1.0" stroke-dasharray="3 1.4"/>
<path d="M496.6,236.5L533.9,244.7" stroke="#d2d2d2" stroke-opacity="0.60" stroke-width="1.1" stroke-dasharray="4 1.2"/>
<path d="M573.8,228.8L606.5,235.5M567.0,229.8L607.8,238.2M557.0,230.1L595.9,238.2M543.4,229.6L576.2,236.5" stroke="#d2d2d2" stroke-opacity="0.60" stroke-width="1.2" stroke-dasharray="6 1"/>
<path d="M884.8,221.6L925.1,228.3M841.2,216.4L880.0,222.9M814.4,214.0L847.4,219.5M771.4,212.8L810.4,219.6M715.8,217.8L748.8,223.8M708.9,218.8L741.5,224.7M634.5,222.5L672.3,229.8M623.6,222.6L664.0,230.5M598.0,226.7L636.8,234.5M597.4,228.9L629.6,235.4" stroke="#d2d2d2" stroke-opacity="0.60" stroke-width="1.3" stroke-dasharray="10 0.8"/>
<path d="M686.4,219.0L717.2,224.7M655.6,222.1L694.6,229.5" stroke="#d2d2d2" stroke-opacity="0.60" stroke-width="1.4" stroke-dasharray="none"/>
<path d="M463.5,244.1L499.4,252.4M454.6,247.2L492.5,256.1M444.6,252.7L477.5,260.6" stroke="#d2d2d2" stroke-opacity="0.64" stroke-width="1.0" stroke-dasharray="3 1.4"/>
<path d="M523.3,234.9L554.6,241.7M507.8,236.5L541.7,243.9" stroke="#d2d2d2" stroke-opacity="0.64" stroke-width="1.1" stroke-dasharray="4 1.2"/>
<path d="M555.5,234.5L587.3,241.2M535.1,232.6L575.2,241.2" stroke="#d2d2d2" stroke-opacity="0.64" stroke-width="1.2" stroke-dasharray="6 1"/>
<path d="M880.0,222.9L916.6,229.0M847.4,219.5L879.4,224.9M811.0,215.5L841.1,220.6M772.5,215.1L809.3,221.5M762.8,215.5L799.8,222.0M737.8,217.5L769.8,223.2M727.9,217.9L759.4,223.5M596.6,231.1L631.9,238.3" stroke="#d2d2d2" stroke-opacity="0.64" stroke-width="1.3" stroke-dasharray="10 0.8"/>
<path d="M667.2,222.0L701.1,228.4" stroke="#d2d2d2" stroke-opacity="0.64" stroke-width="1.4" stroke-dasharray="none"/>
<path d="M469.7,248.1L505.9,256.5M458.8,250.8L496.0,259.6M454.2,252.3L485.6,259.8M444.7,255.4L480.6,264.1" stroke="#d2d2d2" stroke-opacity="0.68" stroke-width="1.0" stroke-dasharray="3 1.4"/>
<path d="M528.3,238.5L566.0,246.7M508.1,241.5L543.2,249.3M497.7,241.7L534.0,249.8M490.1,245.1L520.2,251.9M491.2,247.9L523.0,255.2" stroke="#d2d2d2" stroke-opacity="0.68" stroke-width="1.1" stroke-dasharray="4 1.2"/>
<path d="M576.2,236.5L615.2,244.6M543.4,236.8L577.6,244.1" stroke="#d2d2d2" stroke-opacity="0.68" stroke-width="1.2" stroke-dasharray="6 1"/>
<path d="M879.4,224.9L910.4,230.2M841.1,220.6L874.2,226.2M874.2,226.2L905.3,231.5M808.4,217.1L848.2,223.9M765.1,218.1L806.3,225.3M627.2,230.2L666.3,238.0" stroke="#d2d2d2" stroke-opacity="0.68" stroke-width="1.3" stroke-dasharray="10 0.8"/>
<path d="M714.6,222.0L746.9,227.9M695.0,222.8L734.8,230.2M658.9,224.9L698.8,232.6" stroke="#d2d2d2" stroke-opacity="0.68" stroke-width="1.4" stroke-dasharray="none"/>
<path d="M533.9,244.7L568.7,252.4M507.8,246.5L540.3,253.9" stroke="#d2d2d2" stroke-opacity="0.72" stroke-width="1.1" stroke-dasharray="4 1.2"/>
<path d="M587.3,241.2L617.6,247.6M554.6,241.7L592.3,249.8M541.7,243.9L574.0,251.0" stroke="#d2d2d2" stroke-opacity="0.72" stroke-width="1.2" stroke-dasharray="6 1"/>
<path d="M848.2,223.9L879.9,229.3M810.4,219.6L846.4,225.8M606.5,235.5L643.5,243.1M595.9,238.2L631.5,245.6" stroke="#d2d2d2" stroke-opacity="0.72" stroke-width="1.3" stroke-dasharray="10 0.8"/>
<path d="M768.1,220.7L809.0,228.0M717.2,224.7L751.9,231.1M697.3,225.5L735.9,232.7M672.3,229.8L704.7,236.1M654.5,231.0L685.8,237.1M640.1,230.4L674.7,237.3" stroke="#d2d2d2" stroke-opacity="0.72" stroke-width="1.4" stroke-dasharray="none"/>
<path d="M499.4,252.4L530.1,259.5" stroke="#d2d2d2" stroke-opacity="0.76" stroke-width="1.1" stroke-dasharray="4 1.2"/>
<path d="M575.2,241.2L615.0,249.6M577.6,244.1L616.0,252.4" stroke="#d2d2d2" stroke-opacity="0.76" stroke-width="1.2" stroke-dasharray="6 1"/>
<path d="M629.6,235.4L661.5,241.9M607.8,238.2L638.3,244.5" stroke="#d2d2d2" stroke-opacity="0.76" stroke-width="1.3" stroke-dasharray="10 0.8"/>
<path d="M879.9,229.3L916.1,235.5M846.4,225.8L882.9,232.0M809.3,221.5L839.4,226.7M799.8,222.0L831.5,227.5M769.8,223.2L802.3,229.0M759.4,223.5L795.5,230.0M748.8,223.8L780.1,229.5M741.5,224.7L778.8,231.5M701.1,228.4L735.0,234.8M664.0,230.5L705.9,238.7M636.8,234.5L676.6,242.5" stroke="#d2d2d2" stroke-opacity="0.76" stroke-width="1.4" stroke-dasharray="none"/>
<path d="M477.5,260.6L516.3,269.9M480.6,264.1L511.3,271.5" stroke="#d2d2d2" stroke-opacity="0.80" stroke-width="1.0" stroke-dasharray="3 1.4"/>
<path d="M534.0,249.8L568.9,257.7M520.2,251.9L558.8,260.7M523.0,255.2L555.8,262.7M530.1,259.5L565.7,267.7M505.9,256.5L541.7,264.9M492.5,256.1L532.0,265.4M532.0,265.4L566.0,273.4M496.0,259.6L534.1,268.6M534.1,268.6L566.7,276.3M485.6,259.8L525.3,269.3M525.3,269.3L562.2,278.1M516.3,269.9L548.5,277.7M511.3,271.5L545.7,279.9" stroke="#d2d2d2" stroke-opacity="0.80" stroke-width="1.1" stroke-dasharray="4 1.2"/>
<path d="M566.0,246.7L600.2,254.1M574.0,251.0L615.7,260.1M568.7,252.4L607.6,261.0M543.2,249.3L578.6,257.2M578.6,257.2L616.1,265.6M568.9,257.7L610.3,267.0M540.3,253.9L571.9,261.0M571.9,261.0L611.2,269.9M558.8,260.7L592.2,268.3M555.8,262.7L595.1,271.7M565.7,267.7L597.4,275.1M541.7,264.9L582.5,274.4M582.5,274.4L612.9,281.5M566.0,273.4L599.8,281.3M566.7,276.3L604.7,285.3M562.2,278.1L603.3,287.9M548.5,277.7L579.1,285.1M579.1,285.1L618.4,294.5M545.7,279.9L582.6,288.8M582.6,288.8L617.9,297.4" stroke="#d2d2d2" stroke-opacity="0.80" stroke-width="1.2" stroke-dasharray="6 1"/>
<path d="M631.9,238.3L664.0,244.8M631.5,245.6L670.4,253.6M615.2,244.6L656.5,253.3M617.6,247.6L648.9,254.2M615.0,249.6L652.6,257.6M616.0,252.4L652.5,260.2M592.3,249.8L623.2,256.5M623.2,256.5L662.7,265.0M600.2,254.1L634.1,261.5M634.1,261.5L666.0,268.4M615.7,260.1L654.4,268.6M607.6,261.0L648.5,270.0M616.1,265.6L651.0,273.3M610.3,267.0L642.8,274.3M611.2,269.9L650.9,278.9M592.2,268.3L625.1,275.8M625.1,275.8L658.8,283.5M595.1,271.7L629.2,279.6M629.2,279.6L661.1,286.9M597.4,275.1L633.3,283.4M633.3,283.4L669.3,291.7M612.9,281.5L651.5,290.5M599.8,281.3L633.4,289.2M633.4,289.2L670.4,297.9M604.7,285.3L640.2,293.8M603.3,287.9L638.6,296.4M638.6,296.4L668.8,303.6M618.4,294.5L657.0,303.8M617.9,297.4L656.0,306.6" stroke="#d2d2d2" stroke-opacity="0.80" stroke-width="1.3" stroke-dasharray="10 0.8"/>
<path d="M882.9,232.0L920.8,238.6M839.4,226.7L870.2,232.1M870.2,232.1L903.4,237.8M831.5,227.5L867.7,233.9M867.7,233.9L909.2,241.1M806.3,225.3L844.8,232.1M844.8,232.1L885.6,239.3M885.6,239.3L919.1,245.1M809.0,228.0L850.3,235.3M850.3,235.3L886.9,241.8M886.9,241.8L925.6,248.6M802.3,229.0L843.1,236.3M843.1,236.3L879.1,242.7M879.1,242.7L911.7,248.5M795.5,230.0L833.0,236.8M833.0,236.8L873.4,244.0M873.4,244.0L906.0,249.9M780.1,229.5L811.9,235.2M811.9,235.2L848.2,241.8M848.2,241.8L886.4,248.7M886.4,248.7L927.7,256.2M778.8,231.5L808.9,237.0M808.9,237.0L842.5,243.1M842.5,243.1L878.0,249.6M878.0,249.6L919.5,257.1M746.9,227.9L786.5,235.2M786.5,235.2L825.4,242.3M825.4,242.3L861.4,248.9M861.4,248.9L893.9,254.9M893.9,254.9L935.5,262.5M751.9,231.1L792.7,238.6M792.7,238.6L833.3,246.1M833.3,246.1L872.0,253.3M872.0,253.3L914.0,261.1M734.8,230.2L770.0,236.8M770.0,236.8L800.6,242.5M800.6,242.5L836.3,249.1M836.3,249.1L870.8,255.5M870.8,255.5L911.8,263.2M735.9,232.7L769.7,239.0M769.7,239.0L803.0,245.3M803.0,245.3L833.1,250.9M833.1,250.9L872.1,258.2M872.1,258.2L913.1,265.9M735.0,234.8L769.3,241.3M769.3,241.3L808.7,248.8M808.7,248.8L839.7,254.6M839.7,254.6L872.0,260.7M872.0,260.7L911.1,268.1M694.6,229.5L734.7,237.1M734.7,237.1L772.7,244.3M772.7,244.3L804.2,250.3M804.2,250.3L844.2,258.0M844.2,258.0L877.8,264.3M877.8,264.3L914.6,271.3M698.8,232.6L738.8,240.3M738.8,240.3L779.8,248.1M779.8,248.1L810.3,254.0M810.3,254.0L843.8,260.4M843.8,260.4L875.3,266.4M875.3,266.4L907.5,272.6M704.7,236.1L734.9,241.9M734.9,241.9L768.8,248.4M768.8,248.4L806.9,255.8M806.9,255.8L839.2,262.0M839.2,262.0L872.9,268.5M872.9,268.5L905.4,274.8M705.9,238.7L740.3,245.3M740.3,245.3L772.7,251.6M772.7,251.6L811.4,259.2M811.4,259.2L843.9,265.5M843.9,265.5L873.9,271.3M873.9,271.3L914.7,279.3M685.8,237.1L721.7,244.1M721.7,244.1L761.3,251.9M761.3,251.9L802.9,260.0M802.9,260.0L835.3,266.4M835.3,266.4L866.8,272.6M866.8,272.6L908.1,280.7M674.7,237.3L706.2,243.5M706.2,243.5L739.1,250.0M739.1,250.0L777.8,257.6M777.8,257.6L818.6,265.7M818.6,265.7L849.1,271.7M849.1,271.7L885.8,279.0M885.8,279.0L924.9,286.7M666.3,238.0L705.7,245.8M705.7,245.8L741.2,252.9M741.2,252.9L773.3,259.3M773.3,259.3L809.0,266.4M809.0,266.4L840.3,272.6M840.3,272.6L871.8,278.9M871.8,278.9L907.0,285.9M676.6,242.5L708.9,248.9M708.9,248.9L750.7,257.3M750.7,257.3L786.6,264.5M786.6,264.5L828.1,272.8M828.1,272.8L869.1,281.0M869.1,281.0L901.1,287.4M661.5,241.9L702.7,250.2M702.7,250.2L740.9,257.9M740.9,257.9L781.7,266.1M781.7,266.1L813.7,272.6M813.7,272.6L853.1,280.5M853.1,280.5L884.5,286.9M884.5,286.9L920.8,294.2M664.0,244.8L703.0,252.7M703.0,252.7L733.6,259.0M733.6,259.0L773.4,267.1M773.4,267.1L806.4,273.8M806.4,273.8L844.1,281.4M844.1,281.4L885.9,289.9M885.9,289.9L922.9,297.5M643.5,243.1L680.6,250.7M680.6,250.7L713.0,257.3M713.0,257.3L750.5,265.0M750.5,265.0L786.2,272.3M786.2,272.3L817.8,278.8M817.8,278.8L859.1,287.3M859.1,287.3L892.0,294.0M892.0,294.0L923.8,300.5M638.3,244.5L674.7,252.0M674.7,252.0L709.6,259.2M709.6,259.2L742.4,266.0M742.4,266.0L773.1,272.3M773.1,272.3L812.5,280.4M812.5,280.4L842.6,286.7M842.6,286.7L879.3,294.2M879.3,294.2L920.5,302.7M670.4,253.6L705.8,261.0M705.8,261.0L738.5,267.8M738.5,267.8L769.8,274.3M769.8,274.3L802.6,281.1M802.6,281.1L833.1,287.5M833.1,287.5L867.1,294.5M867.1,294.5L906.1,302.7M656.5,253.3L695.5,261.5M695.5,261.5L729.4,268.6M729.4,268.6L769.9,277.1M769.9,277.1L803.9,284.2M803.9,284.2L836.8,291.1M836.8,291.1L877.6,299.6M877.6,299.6L915.2,307.5M648.9,254.2L690.0,262.9M690.0,262.9L724.1,270.1M724.1,270.1L755.8,276.8M755.8,276.8L786.2,283.2M786.2,283.2L816.7,289.7M816.7,289.7L855.0,297.8M855.0,297.8L892.6,305.7M892.6,305.7L931.0,313.8M652.6,257.6L692.5,266.1M692.5,266.1L730.1,274.1M730.1,274.1L763.5,281.2M763.5,281.2L794.7,287.9M794.7,287.9L825.9,294.5M825.9,294.5L865.0,302.8M865.0,302.8L897.4,309.7M897.4,309.7L931.3,316.9M652.5,260.2L685.1,267.2M685.1,267.2L725.4,275.8M725.4,275.8L756.5,282.5M756.5,282.5L796.4,291.0M796.4,291.0L828.4,297.9M828.4,297.9L858.4,304.3M858.4,304.3L890.8,311.3M890.8,311.3L930.0,319.7M662.7,265.0L701.1,273.3M701.1,273.3L740.5,281.9M740.5,281.9L778.0,290.0M778.0,290.0L812.3,297.4M812.3,297.4L847.1,304.9M847.1,304.9L881.8,312.4M881.8,312.4L922.5,321.2M666.0,268.4L706.1,277.2M706.1,277.2L744.1,285.4M744.1,285.4L783.0,293.9M783.0,293.9L815.0,300.9M815.0,300.9L850.3,308.6M850.3,308.6L889.6,317.1M889.6,317.1L926.5,325.1M654.4,268.6L685.7,275.5M685.7,275.5L727.2,284.6M727.2,284.6L758.4,291.4M758.4,291.4L793.0,299.0M793.0,299.0L834.8,308.2M834.8,308.2L874.4,316.9M874.4,316.9L913.2,325.4M648.5,270.0L683.7,277.8M683.7,277.8L720.6,286.0M720.6,286.0L759.6,294.6M759.6,294.6L794.6,302.3M794.6,302.3L827.4,309.6M827.4,309.6L866.0,318.1M866.0,318.1L906.6,327.1M651.0,273.3L689.1,281.8M689.1,281.8L730.3,291.0M730.3,291.0L762.5,298.2M762.5,298.2L800.3,306.6M800.3,306.6L839.6,315.3M839.6,315.3L874.3,323.1M874.3,323.1L910.2,331.1M642.8,274.3L681.0,282.8M681.0,282.8L715.7,290.6M715.7,290.6L754.8,299.4M754.8,299.4L786.3,306.5M786.3,306.5L828.1,315.9M828.1,315.9L862.4,323.6M862.4,323.6L893.1,330.4M893.1,330.4L926.4,337.9M650.9,278.9L688.5,287.4M688.5,287.4L724.1,295.5M724.1,295.5L760.9,303.8M760.9,303.8L793.6,311.2M793.6,311.2L835.2,320.6M835.2,320.6L869.4,328.3M869.4,328.3L907.1,336.8M658.8,283.5L694.5,291.7M694.5,291.7L729.7,299.7M729.7,299.7L767.3,308.2M767.3,308.2L805.2,316.9M805.2,316.9L839.6,324.7M839.6,324.7L880.7,334.1M880.7,334.1L921.0,343.3M661.1,286.9L701.9,296.3M701.9,296.3L741.4,305.4M741.4,305.4L773.4,312.7M773.4,312.7L814.1,322.1M814.1,322.1L851.4,330.6M851.4,330.6L890.8,339.7M890.8,339.7L928.8,348.4M669.3,291.7L705.8,300.2M705.8,300.2L746.1,309.5M746.1,309.5L776.2,316.5M776.2,316.5L816.3,325.7M816.3,325.7L851.9,334.0M851.9,334.0L888.7,342.5M888.7,342.5L926.6,351.3M651.5,290.5L689.0,299.3M689.0,299.3L723.1,307.2M723.1,307.2L763.4,316.6M763.4,316.6L797.8,324.6M797.8,324.6L833.5,333.0M833.5,333.0L869.8,341.4M869.8,341.4L909.0,350.6M670.4,297.9L708.0,306.8M708.0,306.8L747.4,316.0M747.4,316.0L777.9,323.2M777.9,323.2L816.6,332.3M816.6,332.3L857.2,341.8M857.2,341.8L893.8,350.4M893.8,350.4L924.4,357.6M640.2,293.8L679.3,303.0M679.3,303.0L710.5,310.4M710.5,310.4L742.7,318.1M742.7,318.1L773.2,325.3M773.2,325.3L812.5,334.6M812.5,334.6L853.4,344.3M853.4,344.3L891.3,353.3M891.3,353.3L925.7,361.4M668.8,303.6L703.4,311.9M703.4,311.9L740.5,320.7M740.5,320.7L781.8,330.6M781.8,330.6L823.6,340.6M823.6,340.6L859.3,349.1M859.3,349.1L894.2,357.4M894.2,357.4L925.4,364.9M657.0,303.8L697.2,313.5M697.2,313.5L736.0,322.8M736.0,322.8L767.0,330.3M767.0,330.3L804.5,339.3M804.5,339.3L843.1,348.6M843.1,348.6L878.6,357.2M878.6,357.2L919.8,367.1M656.0,306.6L687.7,314.3M687.7,314.3L727.3,324.0M727.3,324.0L761.6,332.3M761.6,332.3L799.4,341.4M799.4,341.4L836.9,350.6M836.9,350.6L872.0,359.1M872.0,359.1L906.6,367.5" stroke="#d2d2d2" stroke-opacity="0.80" stroke-width="1.4" stroke-dasharray="none"/>
</g>
<polyline points="241.0,167.4 350.0,191.5 460.0,215.0 586.0,241.4 710.0,266.9 890.0,303.9" fill="none" stroke="#050505" stroke-width="1.6"/>
<clipPath id="cpRight"><polygon points="741.6,163.0 811.6,125.2 987.5,158.2 987.5,167.0 951.0,229.0 922.0,267.0 894.0,304.5 892.0,303.8 731.5,170.6"/></clipPath>
<polygon points="741.6,163.0 811.6,125.2 987.5,158.2 987.5,167.0 951.0,229.0 922.0,267.0 894.0,304.5 892.0,303.8 731.5,170.6" fill="#040404" stroke="#040404" stroke-width="1.0" stroke-linejoin="round" />
<g clip-path="url(#cpRight)">
<polygon points="870.0,276.0 902.0,256.0 922.0,264.0 893.0,305.0" fill="#4a3e1c" stroke="none" stroke-width="1" stroke-linejoin="round" />
<polygon points="977.4,190.9 893.2,179.1 893.0,180.8 977.1,193.1" fill="#bdbdbd" stroke="none" stroke-width="1" stroke-linejoin="round" fill-opacity="0.32"/>
<polygon points="963.2,206.4 879.1,193.8 878.8,195.5 962.8,208.5" fill="#bdbdbd" stroke="none" stroke-width="1" stroke-linejoin="round" fill-opacity="0.32"/>
<polygon points="954.0,220.9 870.0,207.7 869.7,209.4 953.6,223.1" fill="#bdbdbd" stroke="none" stroke-width="1" stroke-linejoin="round" fill-opacity="0.32"/>
<polygon points="941.6,235.9 857.7,221.9 857.4,223.6 941.2,238.0" fill="#bdbdbd" stroke="none" stroke-width="1" stroke-linejoin="round" fill-opacity="0.32"/>
<polygon points="929.2,253.8 845.6,239.0 845.2,240.7 928.9,256.0" fill="#bdbdbd" stroke="none" stroke-width="1" stroke-linejoin="round" fill-opacity="0.32"/>
<polygon points="914.4,272.9 830.8,257.1 830.5,258.8 913.9,275.0" fill="#bdbdbd" stroke="none" stroke-width="1" stroke-linejoin="round" fill-opacity="0.32"/>
<polygon points="899.0,296.0 815.7,279.1 815.3,280.8 898.5,298.1" fill="#bdbdbd" stroke="none" stroke-width="1" stroke-linejoin="round" fill-opacity="0.32"/>
<polygon points="813.6,125.6 815.4,125.9 770.1,151.2 733.8,172.5 731.8,170.8" fill="#a8a8a8" stroke="none" stroke-width="1" stroke-linejoin="round" />
<polygon points="812.0,125.3 813.6,125.6 731.8,170.8 730.7,169.9" fill="#ececec" stroke="none" stroke-width="1" stroke-linejoin="round" />
<polygon points="819.9,126.7 821.7,127.1 775.2,153.6 738.1,176.1 736.0,174.3" fill="#a8a8a8" stroke="none" stroke-width="1" stroke-linejoin="round" />
<polygon points="818.2,126.4 819.9,126.7 736.0,174.3 734.9,173.4" fill="#ececec" stroke="none" stroke-width="1" stroke-linejoin="round" />
<polygon points="826.1,127.9 827.9,128.3 780.4,156.1 742.5,179.7 740.3,177.9" fill="#a8a8a8" stroke="none" stroke-width="1" stroke-linejoin="round" />
<polygon points="824.5,127.6 826.1,127.9 740.3,177.9 739.2,177.0" fill="#ececec" stroke="none" stroke-width="1" stroke-linejoin="round" />
<polygon points="832.4,129.1 834.2,129.4 785.7,158.7 746.9,183.4 744.7,181.6" fill="#a8a8a8" stroke="none" stroke-width="1" stroke-linejoin="round" />
<polygon points="830.8,128.8 832.4,129.1 744.7,181.6 743.6,180.6" fill="#ececec" stroke="none" stroke-width="1" stroke-linejoin="round" />
<polygon points="838.7,130.3 840.6,130.6 791.1,161.3 751.5,187.2 749.3,185.3" fill="#a8a8a8" stroke="none" stroke-width="1" stroke-linejoin="round" />
<polygon points="837.1,130.0 838.7,130.3 749.3,185.3 748.1,184.3" fill="#ececec" stroke="none" stroke-width="1" stroke-linejoin="round" />
<polygon points="845.1,131.5 846.9,131.8 796.5,164.0 756.2,191.1 753.9,189.2" fill="#a8a8a8" stroke="none" stroke-width="1" stroke-linejoin="round" />
<polygon points="843.4,131.2 845.1,131.5 753.9,189.2 752.7,188.2" fill="#ececec" stroke="none" stroke-width="1" stroke-linejoin="round" />
<polygon points="851.5,132.7 853.4,133.0 802.0,166.7 761.0,195.1 758.7,193.1" fill="#a8a8a8" stroke="none" stroke-width="1" stroke-linejoin="round" />
<polygon points="849.8,132.4 851.5,132.7 758.7,193.1 757.4,192.1" fill="#ececec" stroke="none" stroke-width="1" stroke-linejoin="round" />
<polygon points="857.9,133.9 859.8,134.2 807.7,169.5 766.0,199.2 763.6,197.2" fill="#a8a8a8" stroke="none" stroke-width="1" stroke-linejoin="round" />
<polygon points="856.3,133.6 857.9,133.9 763.6,197.2 762.3,196.1" fill="#ececec" stroke="none" stroke-width="1" stroke-linejoin="round" />
<polygon points="864.4,135.1 866.3,135.4 813.4,172.4 771.1,203.4 768.6,201.4" fill="#a8a8a8" stroke="none" stroke-width="1" stroke-linejoin="round" />
<polygon points="862.7,134.8 864.4,135.1 768.6,201.4 767.2,200.3" fill="#ececec" stroke="none" stroke-width="1" stroke-linejoin="round" />
<polygon points="870.9,136.3 872.8,136.7 819.1,175.3 776.3,207.8 773.7,205.6" fill="#a8a8a8" stroke="none" stroke-width="1" stroke-linejoin="round" />
<polygon points="869.2,136.0 870.9,136.3 773.7,205.6 772.4,204.5" fill="#ececec" stroke="none" stroke-width="1" stroke-linejoin="round" />
<polygon points="877.5,137.5 879.4,137.9 825.0,178.3 781.6,212.2 779.0,210.0" fill="#a8a8a8" stroke="none" stroke-width="1" stroke-linejoin="round" />
<polygon points="875.8,137.2 877.5,137.5 779.0,210.0 777.6,208.9" fill="#ececec" stroke="none" stroke-width="1" stroke-linejoin="round" />
<polygon points="884.0,138.8 886.0,139.1 831.0,181.3 787.1,216.8 784.4,214.5" fill="#a8a8a8" stroke="none" stroke-width="1" stroke-linejoin="round" />
<polygon points="882.3,138.5 884.0,138.8 784.4,214.5 783.0,213.3" fill="#ececec" stroke="none" stroke-width="1" stroke-linejoin="round" />
<polygon points="890.7,140.0 892.6,140.4 837.1,184.4 792.8,221.4 790.0,219.1" fill="#a8a8a8" stroke="none" stroke-width="1" stroke-linejoin="round" />
<polygon points="888.9,139.7 890.7,140.0 790.0,219.1 788.5,217.9" fill="#ececec" stroke="none" stroke-width="1" stroke-linejoin="round" />
<polygon points="897.3,141.3 899.3,141.6 843.2,187.6 798.6,226.3 795.7,223.9" fill="#a8a8a8" stroke="none" stroke-width="1" stroke-linejoin="round" />
<polygon points="895.6,140.9 897.3,141.3 795.7,223.9 794.2,222.6" fill="#ececec" stroke="none" stroke-width="1" stroke-linejoin="round" />
<polygon points="904.0,142.5 906.0,142.9 849.5,190.9 804.5,231.2 801.6,228.8" fill="#a8a8a8" stroke="none" stroke-width="1" stroke-linejoin="round" />
<polygon points="902.3,142.2 904.0,142.5 801.6,228.8 800.0,227.5" fill="#ececec" stroke="none" stroke-width="1" stroke-linejoin="round" />
<polygon points="910.7,143.8 912.7,144.1 855.9,194.3 810.7,236.3 807.6,233.8" fill="#a8a8a8" stroke="none" stroke-width="1" stroke-linejoin="round" />
<polygon points="909.0,143.4 910.7,143.8 807.6,233.8 806.1,232.5" fill="#ececec" stroke="none" stroke-width="1" stroke-linejoin="round" />
<polygon points="917.5,145.0 919.5,145.4 862.4,197.7 817.0,241.5 813.9,239.0" fill="#a8a8a8" stroke="none" stroke-width="1" stroke-linejoin="round" />
<polygon points="915.8,144.7 917.5,145.0 813.9,239.0 812.2,237.6" fill="#ececec" stroke="none" stroke-width="1" stroke-linejoin="round" />
<polygon points="924.3,146.3 926.3,146.7 869.0,201.2 823.5,246.9 820.3,244.3" fill="#a8a8a8" stroke="none" stroke-width="1" stroke-linejoin="round" />
<polygon points="922.5,146.0 924.3,146.3 820.3,244.3 818.6,242.9" fill="#ececec" stroke="none" stroke-width="1" stroke-linejoin="round" />
<polygon points="931.2,147.6 933.1,148.0 875.8,204.8 830.2,252.5 826.9,249.7" fill="#a8a8a8" stroke="none" stroke-width="1" stroke-linejoin="round" />
<polygon points="929.4,147.3 931.2,147.6 826.9,249.7 825.1,248.3" fill="#ececec" stroke="none" stroke-width="1" stroke-linejoin="round" />
<polygon points="938.0,148.9 940.0,149.3 882.6,208.5 837.0,258.2 833.6,255.4" fill="#a8a8a8" stroke="none" stroke-width="1" stroke-linejoin="round" />
<polygon points="936.2,148.6 938.0,148.9 833.6,255.4 831.9,253.9" fill="#ececec" stroke="none" stroke-width="1" stroke-linejoin="round" />
<polygon points="944.9,150.2 947.0,150.6 889.6,212.3 844.1,264.1 840.6,261.2" fill="#a8a8a8" stroke="none" stroke-width="1" stroke-linejoin="round" />
<polygon points="943.1,149.8 944.9,150.2 840.6,261.2 838.8,259.6" fill="#ececec" stroke="none" stroke-width="1" stroke-linejoin="round" />
<polygon points="951.9,151.5 953.9,151.9 896.7,216.2 851.4,270.1 847.8,267.1" fill="#a8a8a8" stroke="none" stroke-width="1" stroke-linejoin="round" />
<polygon points="950.1,151.1 951.9,151.5 847.8,267.1 845.9,265.6" fill="#ececec" stroke="none" stroke-width="1" stroke-linejoin="round" />
<polygon points="958.9,152.8 960.9,153.2 904.0,220.2 859.0,276.4 855.3,273.3" fill="#a8a8a8" stroke="none" stroke-width="1" stroke-linejoin="round" />
<polygon points="957.1,152.5 958.9,152.8 855.3,273.3 853.3,271.7" fill="#ececec" stroke="none" stroke-width="1" stroke-linejoin="round" />
<polygon points="965.9,154.1 968.0,154.5 911.4,224.4 866.8,282.8 862.9,279.7" fill="#a8a8a8" stroke="none" stroke-width="1" stroke-linejoin="round" />
<polygon points="964.1,153.8 965.9,154.1 862.9,279.7 860.9,278.0" fill="#ececec" stroke="none" stroke-width="1" stroke-linejoin="round" />
<polygon points="973.0,155.4 975.0,155.8 919.0,228.6 874.8,289.5 870.8,286.2" fill="#a8a8a8" stroke="none" stroke-width="1" stroke-linejoin="round" />
<polygon points="971.1,155.1 973.0,155.4 870.8,286.2 868.7,284.5" fill="#ececec" stroke="none" stroke-width="1" stroke-linejoin="round" />
<polygon points="980.1,156.8 982.1,157.2 926.7,233.0 883.1,296.4 879.0,293.0" fill="#a8a8a8" stroke="none" stroke-width="1" stroke-linejoin="round" />
<polygon points="978.2,156.4 980.1,156.8 879.0,293.0 876.8,291.2" fill="#ececec" stroke="none" stroke-width="1" stroke-linejoin="round" />
<polygon points="987.2,158.1 989.3,158.5 934.6,237.4 891.6,303.5 887.4,300.0" fill="#a8a8a8" stroke="none" stroke-width="1" stroke-linejoin="round" />
<polygon points="985.3,157.8 987.2,158.1 887.4,300.0 885.2,298.1" fill="#ececec" stroke="none" stroke-width="1" stroke-linejoin="round" />
<polygon points="994.4,159.4 996.5,159.8 942.7,242.1 900.5,310.8 896.1,307.2" fill="#a8a8a8" stroke="none" stroke-width="1" stroke-linejoin="round" />
<polygon points="992.5,159.1 994.4,159.4 896.1,307.2 893.8,305.3" fill="#ececec" stroke="none" stroke-width="1" stroke-linejoin="round" />
<polygon points="1001.6,160.8 1003.7,161.2 950.9,246.8 909.6,318.4 905.1,314.7" fill="#a8a8a8" stroke="none" stroke-width="1" stroke-linejoin="round" />
<polygon points="999.7,160.4 1001.6,160.8 905.1,314.7 902.7,312.7" fill="#ececec" stroke="none" stroke-width="1" stroke-linejoin="round" />
<polygon points="1008.8,162.2 1010.9,162.5 959.4,251.7 919.1,326.3 914.4,322.4" fill="#a8a8a8" stroke="none" stroke-width="1" stroke-linejoin="round" />
<polygon points="1006.9,161.8 1008.8,162.2 914.4,322.4 912.0,320.4" fill="#ececec" stroke="none" stroke-width="1" stroke-linejoin="round" />
<polygon points="1016.1,163.5 1018.2,163.9 968.0,256.8 928.9,334.4 924.0,330.4" fill="#a8a8a8" stroke="none" stroke-width="1" stroke-linejoin="round" />
<polygon points="1014.2,163.2 1016.1,163.5 924.0,330.4 921.5,328.3" fill="#ececec" stroke="none" stroke-width="1" stroke-linejoin="round" />
<polygon points="1023.4,164.9 1025.5,165.3 976.8,262.0 939.0,342.8 934.0,338.7" fill="#a8a8a8" stroke="none" stroke-width="1" stroke-linejoin="round" />
<polygon points="1021.5,164.5 1023.4,164.9 934.0,338.7 931.4,336.5" fill="#ececec" stroke="none" stroke-width="1" stroke-linejoin="round" />
</g>
<polygon points="270.8,93.5 500.0,128.6 560.0,137.3 741.6,161.8 741.0,164.0 731.0,170.4 560.0,145.6 500.0,135.1 271.0,100.9" fill="#fbf0c9" stroke="#222" stroke-width="0.6" stroke-linejoin="round" />
<polygon points="811.6,125.2 840.0,107.0 838.2,129.9" fill="#e9ddb6" stroke="#222" stroke-width="0.7" stroke-linejoin="round" />
<clipPath id="cpRoof"><polygon points="262.1,92.0 343.3,-0.9 808.5,28.9 741.6,161.8"/></clipPath>
<polygon points="262.1,92.0 343.3,-0.9 808.5,28.9 741.6,161.8" fill="#a14e2e" stroke="#000" stroke-width="1.4" stroke-linejoin="round" />
<g clip-path="url(#cpRoof)" fill="none">
<path d="M345.2,-0.8 L264.0,92.3 M348.7,-0.6 L267.5,92.8 M352.2,-0.3 L271.1,93.3 M355.8,-0.1 L274.7,93.8 M359.3,0.1 L278.2,94.3 M362.9,0.3 L281.8,94.9 M366.5,0.6 L285.5,95.4 M370.2,0.8 L289.1,95.9 M373.8,1.0 L292.8,96.5 M377.5,1.3 L296.5,97.0 M381.1,1.5 L300.2,97.5 M384.8,1.7 L303.9,98.1 M388.6,2.0 L307.7,98.6 M392.3,2.2 L311.5,99.2 M396.1,2.5 L315.3,99.7 M399.9,2.7 L319.1,100.3 M403.7,3.0 L322.9,100.9 M407.5,3.2 L326.8,101.4 M411.4,3.4 L330.7,102.0 M415.2,3.7 L334.6,102.6 M419.1,3.9 L338.6,103.1 M423.1,4.2 L342.6,103.7 M427.0,4.4 L346.5,104.3 M431.0,4.7 L350.6,104.9 M435.0,5.0 L354.6,105.5 M439.0,5.2 L358.7,106.1 M443.0,5.5 L362.8,106.7 M447.1,5.7 L366.9,107.3 M451.2,6.0 L371.1,107.9 M455.3,6.3 L375.2,108.5 M459.4,6.5 L379.4,109.1 M463.5,6.8 L383.7,109.7 M467.7,7.1 L387.9,110.3 M471.9,7.3 L392.2,110.9 M476.2,7.6 L396.5,111.6 M480.4,7.9 L400.8,112.2 M484.7,8.1 L405.2,112.8 M489.0,8.4 L409.6,113.5 M493.3,8.7 L414.0,114.1 M497.7,9.0 L418.5,114.8 M502.1,9.3 L423.0,115.4 M506.5,9.5 L427.5,116.1 M510.9,9.8 L432.0,116.7 M515.4,10.1 L436.6,117.4 M519.9,10.4 L441.2,118.1 M524.4,10.7 L445.8,118.7 M529.0,11.0 L450.5,119.4 M533.6,11.3 L455.2,120.1 M538.2,11.6 L459.9,120.8 M542.8,11.9 L464.7,121.5 M547.5,12.2 L469.5,122.2 M552.2,12.5 L474.3,122.9 M556.9,12.8 L479.1,123.6 M561.7,13.1 L484.0,124.3 M566.4,13.4 L489.0,125.0 M571.3,13.7 L493.9,125.7 M576.1,14.0 L498.9,126.5 M581.0,14.3 L503.9,127.2 M585.9,14.6 L509.0,127.9 M590.8,14.9 L514.1,128.7 M595.8,15.3 L519.2,129.4 M600.8,15.6 L524.4,130.2 M605.8,15.9 L529.6,130.9 M610.9,16.2 L534.9,131.7 M616.0,16.6 L540.1,132.5 M621.2,16.9 L545.5,133.2 M626.3,17.2 L550.8,134.0 M631.5,17.6 L556.2,134.8 M636.8,17.9 L561.7,135.6 M642.1,18.2 L567.1,136.4 M647.4,18.6 L572.7,137.2 M652.7,18.9 L578.2,138.0 M658.1,19.3 L583.8,138.8 M663.5,19.6 L589.5,139.7 M669.0,20.0 L595.1,140.5 M674.5,20.3 L600.9,141.3 M680.0,20.7 L606.6,142.2 M685.6,21.0 L612.4,143.0 M691.2,21.4 L618.3,143.8 M696.8,21.7 L624.2,144.7 M702.5,22.1 L630.1,145.6 M708.2,22.5 L636.1,146.4 M714.0,22.8 L642.2,147.3 M719.8,23.2 L648.2,148.2 M725.7,23.6 L654.4,149.1 M731.5,24.0 L660.5,150.0 M737.5,24.3 L666.8,150.9 M743.5,24.7 L673.0,151.8 M749.5,25.1 L679.3,152.7 M755.5,25.5 L685.7,153.7 M761.6,25.9 L692.1,154.6 M767.8,26.3 L698.6,155.5 M774.0,26.7 L705.1,156.5 M780.2,27.1 L711.7,157.4 M786.5,27.5 L718.3,158.4 M792.8,27.9 L725.0,159.4 M799.2,28.3 L731.7,160.4 M805.6,28.7 L738.5,161.4 M812.1,29.1 L745.4,162.3" stroke="#ad5b39" stroke-width="2.0" stroke-opacity="0.9"/>
<path d="M343.3,-0.9 L262.1,92.0 M346.8,-0.7 L265.6,92.5 M350.3,-0.5 L269.1,93.0 M353.8,-0.2 L272.7,93.5 M357.4,-0.0 L276.3,94.1 M361.0,0.2 L279.9,94.6 M364.5,0.4 L283.5,95.1 M368.2,0.7 L287.1,95.6 M371.8,0.9 L290.8,96.2 M375.4,1.1 L294.4,96.7 M379.1,1.4 L298.1,97.2 M382.8,1.6 L301.9,97.8 M386.5,1.9 L305.6,98.3 M390.3,2.1 L309.4,98.9 M394.0,2.3 L313.2,99.4 M397.8,2.6 L317.0,100.0 M401.6,2.8 L320.8,100.5 M405.4,3.1 L324.7,101.1 M409.2,3.3 L328.6,101.7 M413.1,3.6 L332.5,102.2 M417.0,3.8 L336.4,102.8 M420.9,4.1 L340.4,103.4 M424.8,4.3 L344.3,104.0 M428.8,4.6 L348.4,104.6 M432.8,4.8 L352.4,105.1 M436.8,5.1 L356.4,105.7 M440.8,5.3 L360.5,106.3 M444.8,5.6 L364.6,106.9 M448.9,5.9 L368.8,107.5 M453.0,6.1 L372.9,108.1 M457.1,6.4 L377.1,108.7 M461.3,6.6 L381.3,109.4 M465.4,6.9 L385.6,110.0 M469.6,7.2 L389.8,110.6 M473.8,7.4 L394.1,111.2 M478.1,7.7 L398.5,111.8 M482.3,8.0 L402.8,112.5 M486.6,8.3 L407.2,113.1 M491.0,8.5 L411.6,113.8 M495.3,8.8 L416.0,114.4 M499.7,9.1 L420.5,115.1 M504.1,9.4 L425.0,115.7 M508.5,9.7 L429.5,116.4 M513.0,10.0 L434.1,117.0 M517.4,10.2 L438.7,117.7 M521.9,10.5 L443.3,118.4 M526.5,10.8 L447.9,119.0 M531.0,11.1 L452.6,119.7 M535.6,11.4 L457.3,120.4 M540.3,11.7 L462.0,121.1 M544.9,12.0 L466.8,121.8 M549.6,12.3 L471.6,122.5 M554.3,12.6 L476.5,123.2 M559.0,12.9 L481.3,123.9 M563.8,13.2 L486.2,124.6 M568.6,13.5 L491.2,125.3 M573.4,13.8 L496.2,126.1 M578.3,14.1 L501.2,126.8 M583.2,14.5 L506.2,127.5 M588.1,14.8 L511.3,128.3 M593.1,15.1 L516.4,129.0 M598.0,15.4 L521.6,129.8 M603.1,15.7 L526.8,130.5 M608.1,16.1 L532.0,131.3 M613.2,16.4 L537.2,132.1 M618.3,16.7 L542.5,132.8 M623.5,17.0 L547.9,133.6 M628.7,17.4 L553.3,134.4 M633.9,17.7 L558.7,135.2 M639.2,18.0 L564.1,136.0 M644.4,18.4 L569.6,136.8 M649.8,18.7 L575.2,137.6 M655.1,19.1 L580.7,138.4 M660.5,19.4 L586.3,139.2 M666.0,19.8 L592.0,140.0 M671.4,20.1 L597.7,140.9 M677.0,20.5 L603.4,141.7 M682.5,20.8 L609.2,142.5 M688.1,21.2 L615.1,143.4 M693.7,21.5 L620.9,144.2 M699.4,21.9 L626.9,145.1 M705.1,22.3 L632.8,146.0 M710.8,22.6 L638.8,146.8 M716.6,23.0 L644.9,147.7 M722.4,23.4 L651.0,148.6 M728.3,23.8 L657.1,149.5 M734.2,24.1 L663.3,150.4 M740.2,24.5 L669.6,151.3 M746.2,24.9 L675.9,152.2 M752.2,25.3 L682.2,153.2 M758.3,25.7 L688.6,154.1 M764.4,26.1 L695.0,155.0 M770.6,26.5 L701.5,156.0 M776.8,26.9 L708.1,156.9 M783.0,27.3 L714.7,157.9 M789.3,27.7 L721.3,158.8 M795.7,28.1 L728.0,159.8 M802.1,28.5 L734.8,160.8 M808.5,28.9 L741.6,161.8" stroke="#6c2b15" stroke-width="1.1" stroke-opacity="0.62"/>
<path d="M333.3,10.8L336.4,11.0M328.1,16.7L331.3,16.9M322.9,22.6L326.0,22.9M317.6,28.7L320.8,28.9M312.3,34.7L315.5,35.0M307.0,40.9L310.1,41.2M301.6,47.1L304.7,47.4M296.1,53.3L299.3,53.6M290.6,59.6L293.8,60.0M285.0,66.0L288.2,66.3M279.4,72.4L282.6,72.8M273.8,78.9L276.9,79.3M268.0,85.4L271.2,85.9M334.2,14.0L337.4,14.2M329.0,19.9L332.2,20.2M323.8,25.9L326.9,26.2M318.5,32.0L321.7,32.3M313.2,38.1L316.3,38.4M307.8,44.3L311.0,44.6M302.3,50.5L305.5,50.9M296.9,56.8L300.0,57.2M291.3,63.2L294.5,63.6M285.8,69.6L288.9,70.0M280.1,76.1L283.3,76.5M274.4,82.6L277.6,83.0M268.7,89.2L271.9,89.7M340.3,11.3L343.5,11.5M335.1,17.2L338.3,17.5M329.9,23.2L333.1,23.5M324.7,29.3L327.8,29.6M319.4,35.4L322.5,35.7M314.0,41.6L317.2,41.9M308.6,47.8L311.8,48.1M303.1,54.1L306.3,54.4M297.6,60.4L300.8,60.8M292.1,66.8L295.3,67.2M286.5,73.3L289.7,73.7M280.8,79.8L284.0,80.2M275.1,86.4L278.3,86.8M341.3,14.5L344.5,14.8M336.1,20.5L339.3,20.8M330.8,26.6L334.0,26.8M325.6,32.7L328.8,32.9M320.2,38.8L323.4,39.1M314.9,45.0L318.1,45.4M309.4,51.3L312.6,51.7M303.9,57.6L307.2,58.0M298.4,64.0L301.6,64.4M292.8,70.5L296.0,70.9M287.2,77.0L290.4,77.4M281.5,83.6L284.7,84.0M275.8,90.2L279.0,90.7M347.4,11.8L350.6,12.0M342.2,17.8L345.4,18.0M337.0,23.8L340.2,24.1M331.8,29.9L335.0,30.2M326.5,36.1L329.7,36.4M321.1,42.3L324.3,42.6M315.7,48.5L318.9,48.9M310.3,54.9L313.5,55.2M304.8,61.2L308.0,61.6M299.2,67.7L302.4,68.1M293.6,74.2L296.8,74.6M287.9,80.8L291.2,81.2M282.2,87.4L285.4,87.8M353.5,9.1L356.8,9.3M348.4,15.1L351.6,15.3M343.2,21.1L346.5,21.3M338.0,27.2L341.2,27.4M332.7,33.3L336.0,33.6M327.4,39.5L330.6,39.8M322.0,45.8L325.3,46.1M316.6,52.1L319.8,52.4M311.1,58.5L314.4,58.8M305.6,64.9L308.8,65.3M300.0,71.4L303.2,71.8M294.4,77.9L297.6,78.4M288.7,84.6L291.9,85.0M282.9,91.2L286.2,91.7M354.6,12.3L357.8,12.6M349.4,18.3L352.7,18.6M344.2,24.4L347.5,24.7M339.0,30.6L342.2,30.8M333.7,36.7L336.9,37.0M328.3,43.0L331.6,43.3M322.9,49.3L326.2,49.6M317.5,55.7L320.7,56.0M312.0,62.1L315.2,62.5M306.4,68.6L309.7,69.0M300.8,75.1L304.1,75.5M295.1,81.7L298.4,82.2M289.4,88.4L292.7,88.9M360.7,9.6L364.0,9.8M355.6,15.6L358.9,15.9M350.4,21.7L353.7,21.9M345.2,27.8L348.5,28.1M339.9,34.0L343.2,34.3M334.6,40.2L337.9,40.5M329.2,46.5L332.5,46.8M323.8,52.9L327.1,53.2M318.3,59.3L321.6,59.6M312.8,65.7L316.1,66.1M307.2,72.3L310.5,72.7M301.6,78.9L304.9,79.3M295.9,85.5L299.2,86.0M290.2,92.3L293.5,92.7M361.8,12.9L365.1,13.1M356.7,18.9L360.0,19.2M351.5,25.0L354.8,25.3M346.2,31.2L349.5,31.5M340.9,37.4L344.2,37.7M335.6,43.7L338.9,44.0M330.2,50.1L333.5,50.4M324.7,56.5L328.0,56.8M319.2,62.9L322.6,63.3M313.7,69.5L317.0,69.9M308.1,76.0L311.4,76.5M302.4,82.7L305.7,83.1M296.7,89.4L300.0,89.9M368.0,10.1L371.3,10.4M362.9,16.2L366.2,16.4M357.7,22.3L361.0,22.5M352.5,28.4L355.8,28.7M347.2,34.6L350.6,34.9M341.9,40.9L345.3,41.2M336.6,47.2L339.9,47.6M331.1,53.6L334.5,54.0M325.7,60.1L329.0,60.5M320.2,66.6L323.5,67.0M314.6,73.2L317.9,73.6M308.9,79.8L312.3,80.3M303.3,86.5L306.6,87.0M297.5,93.3L300.8,93.8M369.2,13.4L372.5,13.7M364.0,19.5L367.3,19.8M358.8,25.6L362.1,25.9M353.6,31.9L356.9,32.1M348.3,38.1L351.6,38.4M342.9,44.4L346.3,44.8M337.6,50.8L340.9,51.2M332.1,57.3L335.5,57.6M326.6,63.8L330.0,64.2M321.1,70.3L324.4,70.8M315.5,77.0L318.8,77.4M309.8,83.7L313.2,84.1M304.1,90.4L307.4,90.9M375.4,10.6L378.8,10.9M370.3,16.7L373.6,17.0M365.1,22.9L368.5,23.1M359.9,29.1L363.3,29.4M354.6,35.3L358.0,35.6M349.3,41.6L352.7,42.0M344.0,48.0L347.3,48.3M338.6,54.4L341.9,54.8M333.1,60.9L336.4,61.3M327.6,67.5L330.9,67.9M322.0,74.1L325.4,74.5M316.4,80.8L319.7,81.2M310.7,87.6L314.1,88.0M304.9,94.4L308.3,94.9M376.6,14.0L379.9,14.2M371.4,20.1L374.8,20.3M366.2,26.3L369.6,26.6M361.0,32.5L364.4,32.8M355.7,38.8L359.1,39.1M350.4,45.2L353.8,45.5M345.0,51.6L348.4,52.0M339.6,58.1L342.9,58.5M334.1,64.6L337.5,65.0M328.5,71.3L331.9,71.7M322.9,77.9L326.3,78.4M317.3,84.7L320.7,85.1M311.6,91.5L315.0,92.0M382.9,11.2L386.2,11.4M377.8,17.3L381.1,17.6M372.6,23.5L376.0,23.7M367.4,29.7L370.8,30.0M362.1,36.0L365.5,36.3M356.8,42.4L360.2,42.7M351.5,48.8L354.9,49.1M346.0,55.2L349.4,55.6M340.6,61.8L344.0,62.2M335.1,68.4L338.5,68.8M329.5,75.1L332.9,75.5M323.9,81.8L327.3,82.2M318.2,88.6L321.6,89.1M312.5,95.5L315.9,95.9M384.1,14.5L387.5,14.8M378.9,20.7L382.4,20.9M373.8,26.9L377.2,27.2M368.5,33.2L371.9,33.5M363.3,39.5L366.7,39.8M357.9,45.9L361.3,46.3M352.5,52.4L356.0,52.8M347.1,58.9L350.5,59.3M341.6,65.5L345.0,65.9M336.1,72.2L339.5,72.6M330.5,78.9L333.9,79.3M324.8,85.7L328.3,86.1M319.1,92.5L322.6,93.0M390.4,11.7L393.8,12.0M385.3,17.9L388.7,18.1M380.1,24.1L383.6,24.4M374.9,30.4L378.4,30.7M369.7,36.7L373.1,37.0M364.4,43.1L367.8,43.4M359.0,49.5L362.5,49.9M353.6,56.1L357.1,56.4M348.2,62.6L351.6,63.0M342.7,69.3L346.1,69.7M337.1,76.0L340.5,76.4M331.5,82.8L334.9,83.2M325.8,89.6L329.2,90.1M320.1,96.5L323.5,97.0M396.7,8.9L400.2,9.2M391.7,15.1L395.1,15.3M386.5,21.3L390.0,21.5M381.4,27.5L384.8,27.8M376.1,33.9L379.6,34.2M370.9,40.2L374.3,40.6M365.5,46.7L369.0,47.0M360.2,53.2L363.6,53.6M354.7,59.8L358.2,60.1M349.3,66.4L352.7,66.8M343.7,73.1L347.2,73.5M338.1,79.9L341.6,80.3M332.5,86.7L335.9,87.2M326.8,93.6L330.2,94.1M398.0,12.3L401.5,12.5M392.9,18.5L396.4,18.7M387.8,24.7L391.3,25.0M382.6,31.0L386.1,31.3M377.3,37.4L380.8,37.7M372.1,43.8L375.5,44.2M366.7,50.3L370.2,50.7M361.3,56.9L364.8,57.3M355.9,63.5L359.3,63.9M350.3,70.2L353.8,70.6M344.8,77.0L348.3,77.4M339.2,83.8L342.7,84.2M333.5,90.7L337.0,91.1M327.8,97.6L331.3,98.1M404.4,9.4L407.9,9.7M399.3,15.6L402.8,15.9M394.2,21.9L397.7,22.2M389.1,28.2L392.5,28.5M383.8,34.5L387.3,34.9M378.6,41.0L382.1,41.3M373.3,47.5L376.8,47.8M367.9,54.0L371.4,54.4M362.5,60.6L366.0,61.0M357.0,67.3L360.5,67.7M351.4,74.0L355.0,74.5M345.9,80.9L349.4,81.3M340.2,87.7L343.7,88.2M334.5,94.7L338.0,95.2M405.8,12.8L409.3,13.1M400.7,19.0L404.2,19.3M395.5,25.3L399.0,25.6M390.3,31.7L393.8,32.0M385.1,38.1L388.6,38.4M379.8,44.6L383.3,44.9M374.5,51.1L378.0,51.5M369.1,57.7L372.6,58.1M363.6,64.4L367.1,64.8M358.1,71.1L361.6,71.5M352.6,77.9L356.1,78.4M347.0,84.8L350.5,85.3M341.3,91.7L344.8,92.2M335.6,98.7L339.1,99.2M412.2,10.0L415.7,10.2M407.1,16.2L410.6,16.5M402.0,22.5L405.5,22.8M396.8,28.8L400.4,29.1M391.6,35.2L395.2,35.5M386.4,41.7L389.9,42.0M381.1,48.2L384.6,48.6M375.7,54.8L379.2,55.2M370.3,61.5L373.8,61.9M364.8,68.2L368.3,68.6M359.3,75.0L362.8,75.4M353.7,81.9L357.2,82.3M348.1,88.8L351.6,89.3M342.4,95.8L345.9,96.3M413.6,13.4L417.1,13.6M408.5,19.6L412.0,19.9M403.3,26.0L406.9,26.3M398.2,32.4L401.7,32.7M392.9,38.8L396.5,39.1M387.6,45.3L391.2,45.7M382.3,51.9L385.9,52.3M376.9,58.6L380.5,59.0M371.5,65.3L375.1,65.7M366.0,72.1L369.6,72.5M360.4,78.9L364.0,79.4M354.8,85.8L358.4,86.3M349.2,92.8L352.7,93.3M343.4,99.9L347.0,100.4M420.0,10.5L423.6,10.8M415.0,16.8L418.5,17.0M409.9,23.1L413.4,23.4M404.7,29.5L408.3,29.8M399.5,35.9L403.1,36.3M394.3,42.4L397.8,42.8M388.9,49.0L392.5,49.4M383.6,55.7L387.2,56.0M378.2,62.4L381.8,62.7M372.7,69.1L376.3,69.5M367.2,76.0L370.8,76.4M361.6,82.9L365.2,83.3M356.0,89.8L359.6,90.3M350.3,96.9L353.9,97.4M421.5,13.9L425.0,14.2M416.4,20.2L420.0,20.5M411.3,26.6L414.9,26.9M406.1,33.0L409.7,33.4M400.9,39.5L404.5,39.9M395.6,46.1L399.2,46.5M390.3,52.7L393.9,53.1M384.9,59.4L388.5,59.8M379.4,66.2L383.1,66.6M374.0,73.0L377.6,73.4M368.4,79.9L372.0,80.4M362.8,86.9L366.4,87.3M357.1,93.9L360.8,94.4M351.4,101.0L355.1,101.5M428.0,11.1L431.6,11.3M422.9,17.4L426.5,17.6M417.8,23.7L421.4,24.0M412.7,30.2L416.3,30.5M407.5,36.6L411.1,37.0M402.2,43.2L405.9,43.5M396.9,49.8L400.6,50.2M391.6,56.5L395.2,56.9M386.2,63.2L389.8,63.6M380.7,70.0L384.4,70.5M375.2,76.9L378.8,77.4M369.6,83.9L373.3,84.3M364.0,90.9L367.7,91.4M358.3,98.0L362.0,98.5M429.5,14.5L433.1,14.8M424.4,20.9L428.0,21.1M419.3,27.3L422.9,27.6M414.1,33.7L417.7,34.1M408.9,40.3L412.5,40.6M403.6,46.9L407.3,47.2M398.3,53.6L401.9,53.9M392.9,60.3L396.6,60.7M387.5,67.1L391.2,67.5M382.0,74.0L385.7,74.4M376.5,80.9L380.1,81.4M370.9,87.9L374.6,88.4M365.2,95.0L368.9,95.5M359.5,102.2L363.2,102.7M436.0,11.6L439.6,11.9M431.0,18.0L434.6,18.2M425.9,24.4L429.5,24.7M420.7,30.8L424.4,31.1M415.6,37.4L419.2,37.7M410.3,44.0L414.0,44.3M405.0,50.6L408.7,51.0M399.7,57.3L403.4,57.7M394.3,64.1L398.0,64.5M388.8,71.0L392.5,71.4M383.3,77.9L387.0,78.4M377.8,84.9L381.4,85.4M372.1,92.0L375.8,92.5M366.5,99.1L370.2,99.7M437.5,15.1L441.2,15.3M432.5,21.5L436.2,21.7M427.4,27.9L431.1,28.2M422.2,34.4L425.9,34.8M417.0,41.0L420.7,41.4M411.8,47.7L415.4,48.0M406.4,54.4L410.1,54.8M401.1,61.2L404.8,61.6M395.7,68.0L399.4,68.4M390.2,74.9L393.9,75.4M384.6,81.9L388.4,82.4M379.1,89.0L382.8,89.5M373.4,96.1L377.1,96.6M367.7,103.3L371.4,103.9M444.1,12.2L447.8,12.4M439.1,18.6L442.8,18.8M434.0,25.0L437.7,25.3M428.9,31.5L432.6,31.8M423.7,38.1L427.4,38.4M418.5,44.7L422.2,45.1M413.2,51.4L416.9,51.8M407.9,58.2L411.6,58.6M402.5,65.0L406.2,65.4M397.0,71.9L400.8,72.4M391.5,78.9L395.3,79.4M386.0,86.0L389.7,86.4M380.4,93.1L384.1,93.6M374.7,100.3L378.4,100.8M450.7,9.3L454.4,9.5M445.7,15.7L449.4,15.9M440.7,22.1L444.4,22.4M435.6,28.6L439.3,28.9M430.4,35.1L434.2,35.5M425.2,41.8L429.0,42.1M420.0,48.5L423.7,48.8M414.7,55.2L418.4,55.6M409.3,62.1L413.1,62.5M403.9,68.9L407.7,69.4M398.4,75.9L402.2,76.4M392.9,83.0L396.7,83.4M387.3,90.1L391.1,90.6M381.7,97.2L385.5,97.8M376.0,104.5L379.8,105.0M452.4,12.8L456.1,13.0M447.3,19.2L451.1,19.4M442.3,25.7L446.0,26.0M437.2,32.2L440.9,32.5M432.0,38.8L435.7,39.2M426.8,45.5L430.5,45.9M421.5,52.2L425.3,52.6M416.2,59.1L419.9,59.5M410.8,65.9L414.6,66.4M405.3,72.9L409.1,73.3M399.9,79.9L403.6,80.4M394.3,87.0L398.1,87.5M388.7,94.2L392.5,94.7M383.0,101.4L386.8,102.0M459.0,9.8L462.7,10.1M454.0,16.2L457.8,16.5M449.0,22.7L452.7,23.0M443.9,29.3L447.6,29.6M438.7,35.9L442.5,36.2M433.6,42.5L437.3,42.9M428.3,49.3L432.1,49.6M423.0,56.1L426.8,56.5M417.7,62.9L421.5,63.4M412.3,69.9L416.1,70.3M406.8,76.9L410.6,77.4M401.3,84.0L405.1,84.5M395.7,91.2L399.5,91.7M390.1,98.4L393.9,98.9M384.4,105.7L388.2,106.2M460.7,13.3L464.5,13.6M455.7,19.8L459.5,20.1M450.6,26.3L454.4,26.6M445.5,32.9L449.3,33.2M440.3,39.6L444.1,39.9M435.1,46.3L438.9,46.6M429.9,53.1L433.7,53.5M424.6,59.9L428.4,60.3M419.2,66.9L423.0,67.3M413.8,73.9L417.6,74.3M408.3,81.0L412.1,81.4M402.7,88.1L406.6,88.6M397.1,95.3L401.0,95.8M391.5,102.6L395.3,103.2M467.4,10.4L471.2,10.6M462.4,16.8L466.2,17.1M457.4,23.4L461.2,23.7M452.3,29.9L456.1,30.3M447.2,36.6L451.0,36.9M442.0,43.3L445.8,43.7M436.7,50.1L440.6,50.5M431.5,56.9L435.3,57.3M426.1,63.9L430.0,64.3M420.7,70.8L424.6,71.3M415.3,77.9L419.1,78.4M409.8,85.1L413.6,85.5M404.2,92.3L408.1,92.8M398.6,99.5L402.4,100.1M392.9,106.9L396.8,107.5M469.1,13.9L472.9,14.2M464.1,20.4L467.9,20.7M459.1,27.0L462.9,27.3M454.0,33.6L457.8,33.9M448.8,40.3L452.7,40.7M443.6,47.1L447.5,47.4M438.4,53.9L442.2,54.3M433.1,60.8L436.9,61.2M427.7,67.8L431.6,68.2M422.3,74.9L426.2,75.3M416.8,82.0L420.7,82.5M411.3,89.2L415.2,89.7M405.7,96.5L409.6,97.0M400.0,103.8L403.9,104.4M475.8,11.0L479.7,11.2M470.9,17.5L474.7,17.7M465.8,24.0L469.7,24.3M460.8,30.6L464.6,30.9M455.7,37.3L459.5,37.7M450.5,44.1L454.4,44.4M445.3,50.9L449.2,51.3M440.0,57.8L443.9,58.2M434.7,64.8L438.6,65.2M429.3,71.8L433.2,72.3M423.9,78.9L427.8,79.4M418.4,86.1L422.3,86.6M412.8,93.4L416.7,93.9M407.2,100.7L411.1,101.3M401.5,108.1L405.4,108.7M477.6,14.5L481.5,14.8M472.6,21.0L476.5,21.3M467.6,27.7L471.5,28.0M462.5,34.3L466.4,34.7M457.4,41.1L461.3,41.4M452.2,47.9L456.1,48.3M447.0,54.8L450.9,55.2M441.7,61.7L445.6,62.1M436.3,68.8L440.2,69.2M430.9,75.9L434.8,76.3M425.4,83.0L429.4,83.5M419.9,90.3L423.9,90.8M414.4,97.6L418.3,98.1M408.7,105.0L412.7,105.6M484.4,11.5L488.3,11.8M479.4,18.1L483.3,18.3M474.4,24.7L478.3,25.0M469.4,31.3L473.3,31.7M464.3,38.1L468.2,38.4M459.1,44.9L463.0,45.2M453.9,51.7L457.8,52.1M448.7,58.7L452.6,59.1M443.3,65.7L447.3,66.1M438.0,72.8L441.9,73.2M432.5,80.0L436.5,80.4M427.1,87.2L431.0,87.7M421.5,94.5L425.5,95.0M415.9,101.9L419.9,102.5M410.3,109.4L414.2,109.9M486.3,15.1L490.2,15.4M481.3,21.7L485.2,22.0M476.3,28.3L480.2,28.6M471.2,35.1L475.1,35.4M466.1,41.9L470.0,42.2M460.9,48.7L464.8,49.1M455.7,55.6L459.6,56.0M450.4,62.7L454.3,63.1M445.0,69.7L449.0,70.2M439.6,76.9L443.6,77.3M434.2,84.1L438.2,84.6M428.7,91.4L432.7,91.9M423.1,98.8L427.1,99.3M417.5,106.3L421.5,106.8M493.1,12.1L497.0,12.4M488.1,18.7L492.1,19.0M483.1,25.3L487.1,25.6M478.1,32.0L482.1,32.4M473.0,38.8L477.0,39.2M467.9,45.7L471.8,46.0M462.7,52.6L466.6,53.0M457.4,59.6L461.4,60.0M452.1,66.7L456.1,67.1M446.8,73.8L450.8,74.2M441.3,81.0L445.3,81.5M435.9,88.3L439.9,88.8M430.3,95.7L434.3,96.2M424.7,103.1L428.8,103.7M419.1,110.6L423.1,111.2M495.0,15.7L499.0,16.0M490.0,22.3L494.0,22.6M485.0,29.0L489.0,29.3M480.0,35.8L483.9,36.1M474.9,42.6L478.8,43.0M469.7,49.5L473.7,49.9M464.5,56.5L468.5,56.9M459.2,63.6L463.2,64.0M453.9,70.7L457.9,71.1M448.5,77.9L452.5,78.4M443.1,85.2L447.1,85.7M437.6,92.5L441.6,93.1M432.0,100.0L436.0,100.5M426.4,107.5L430.4,108.1M501.9,12.7L505.8,13.0M496.9,19.3L500.9,19.6M492.0,26.0L496.0,26.3M486.9,32.8L490.9,33.1M481.8,39.6L485.9,39.9M476.7,46.5L480.7,46.9M471.5,53.5L475.6,53.8M466.3,60.5L470.3,60.9M461.0,67.6L465.0,68.0M455.7,74.8L459.7,75.3M450.3,82.1L454.3,82.5M444.8,89.4L448.8,89.9M439.3,96.8L443.3,97.4M433.7,104.3L437.8,104.9M428.1,111.9L432.1,112.5M503.8,16.3L507.8,16.6M498.9,23.0L502.9,23.3M493.9,29.7L497.9,30.0M488.8,36.5L492.9,36.9M483.8,43.4L487.8,43.8M478.6,50.4L482.7,50.8M473.4,57.4L477.5,57.8M468.1,64.5L472.2,64.9M462.8,71.7L466.9,72.1M457.5,78.9L461.5,79.4M452.0,86.3L456.1,86.8M446.6,93.7L450.6,94.2M441.0,101.2L445.1,101.7M435.4,108.7L439.5,109.3M510.7,13.3L514.8,13.5M505.8,19.9L509.9,20.2M500.9,26.7L504.9,27.0M495.9,33.5L499.9,33.8M490.8,40.4L494.9,40.7M485.7,47.3L489.7,47.7M480.5,54.3L484.6,54.7M475.3,61.4L479.4,61.8M470.0,68.6L474.1,69.0M464.7,75.8L468.8,76.3M459.3,83.1L463.4,83.6M453.8,90.5L457.9,91.0M448.3,98.0L452.4,98.6M442.8,105.6L446.9,106.1M437.1,113.2L441.3,113.8M512.8,16.9L516.8,17.2M507.9,23.6L511.9,23.9M502.9,30.4L507.0,30.7M497.8,37.3L501.9,37.6M492.8,44.2L496.9,44.6M487.6,51.2L491.7,51.6M482.4,58.3L486.5,58.7M477.2,65.5L481.3,65.9M471.9,72.7L476.0,73.1M466.5,80.0L470.7,80.5M461.1,87.4L465.3,87.9M455.7,94.8L459.8,95.4M450.1,102.4L454.3,102.9M444.5,110.0L448.7,110.6M519.7,13.9L523.8,14.1M514.8,20.6L518.9,20.9M509.9,27.4L514.0,27.7M504.9,34.2L509.0,34.6M499.9,41.1L504.0,41.5M494.8,48.1L498.9,48.5M489.6,55.2L493.7,55.6M484.4,62.3L488.5,62.8M479.1,69.6L483.3,70.0M473.8,76.9L478.0,77.3M468.4,84.2L472.6,84.7M463.0,91.7L467.2,92.2M457.5,99.2L461.7,99.8M451.9,106.8L456.1,107.4M446.3,114.5L450.5,115.1M521.8,17.5L526.0,17.8M516.9,24.3L521.1,24.6M512.0,31.1L516.1,31.5M507.0,38.1L511.1,38.4M501.9,45.0L506.0,45.4M496.8,52.1L500.9,52.5M491.6,59.2L495.8,59.6M486.4,66.4L490.5,66.9M481.1,73.7L485.3,74.2M475.7,81.1L479.9,81.5M470.3,88.5L474.5,89.0M464.9,96.0L469.1,96.6M459.4,103.6L463.6,104.2M453.8,111.3L458.0,111.9M528.8,14.5L533.0,14.8M524.0,21.2L528.1,21.5M519.0,28.1L523.2,28.4M514.1,35.0L518.2,35.3M509.0,41.9L513.2,42.3M503.9,49.0L508.1,49.4M498.8,56.1L503.0,56.5M493.6,63.3L497.8,63.7M488.4,70.6L492.6,71.0M483.1,77.9L487.3,78.4M477.7,85.3L481.9,85.8M472.3,92.8L476.5,93.4M466.8,100.4L471.0,101.0M461.3,108.1L465.5,108.7M455.7,115.9L459.9,116.5M531.0,18.2L535.2,18.5M526.1,25.0L530.3,25.3M521.2,31.9L525.4,32.2M516.2,38.8L520.4,39.2M511.1,45.9L515.3,46.2M506.0,53.0L510.2,53.4M500.9,60.1L505.1,60.6M495.7,67.4L499.9,67.8M490.4,74.7L494.6,75.2M485.1,82.1L489.3,82.6M479.7,89.6L483.9,90.2M474.2,97.2L478.5,97.8M468.7,104.9L473.0,105.4M463.2,112.6L467.4,113.2M538.1,15.1L542.3,15.4M533.2,21.9L537.4,22.2M528.3,28.8L532.5,29.1M523.3,35.7L527.6,36.1M518.3,42.7L522.5,43.1M513.3,49.8L517.5,50.2M508.1,57.0L512.4,57.4M503.0,64.2L507.2,64.7M497.7,71.6L502.0,72.0M492.4,79.0L496.7,79.4M487.1,86.4L491.3,86.9M481.7,94.0L486.0,94.5M476.2,101.7L480.5,102.2M470.7,109.4L475.0,110.0M465.1,117.2L469.4,117.8M540.3,18.8L544.5,19.1M535.4,25.7L539.7,26.0M530.5,32.6L534.7,32.9M525.5,39.6L529.8,40.0M520.5,46.7L524.7,47.1M515.4,53.8L519.7,54.2M510.3,61.1L514.5,61.5M505.1,68.4L509.3,68.8M499.8,75.8L504.1,76.2M494.5,83.2L498.8,83.7M489.1,90.8L493.4,91.3M483.7,98.4L488.0,99.0M478.2,106.1L482.5,106.7M472.7,113.9L477.0,114.5M547.4,15.7L551.7,16.0M542.6,22.6L546.8,22.9M537.7,29.5L541.9,29.8M532.7,36.5L537.0,36.8M527.7,43.5L532.0,43.9M522.7,50.7L527.0,51.1M517.6,57.9L521.9,58.3M512.4,65.2L516.7,65.6M507.2,72.6L511.5,73.0M501.9,80.0L506.2,80.5M496.6,87.6L500.9,88.1M491.2,95.2L495.5,95.7M485.8,102.9L490.1,103.5M480.2,110.7L484.6,111.3M474.7,118.6L479.0,119.2M549.7,19.5L554.0,19.8M544.9,26.4L549.1,26.7M539.9,33.3L544.2,33.7M535.0,40.4L539.3,40.8M530.0,47.5L534.3,47.9M524.9,54.7L529.2,55.1M519.8,62.0L524.1,62.4M514.6,69.4L518.9,69.8M509.4,76.8L513.7,77.3M504.1,84.3L508.4,84.9M498.7,92.0L503.1,92.5M493.3,99.6L497.7,100.2M487.8,107.4L492.2,108.0M482.3,115.3L486.7,115.9M556.9,16.3L561.2,16.6M552.1,23.2L556.4,23.5M547.2,30.2L551.5,30.5M542.2,37.3L546.6,37.6M537.3,44.4L541.6,44.7M532.2,51.6L536.6,52.0M527.1,58.8L531.5,59.3M522.0,66.2L526.4,66.6M516.8,73.6L521.2,74.1M511.6,81.1L515.9,81.6M506.2,88.7L510.6,89.2M500.9,96.4L505.3,96.9M495.4,104.2L499.8,104.7M489.9,112.0L494.3,112.6M484.4,119.9L488.8,120.6M559.2,20.1L563.6,20.4M554.4,27.1L558.7,27.4M549.5,34.1L553.9,34.4M544.6,41.2L548.9,41.6M539.6,48.4L543.9,48.8M534.5,55.6L538.9,56.1M529.4,63.0L533.8,63.4M524.3,70.4L528.6,70.9M519.0,77.9L523.4,78.4M513.8,85.5L518.2,86.0M508.4,93.1L512.8,93.7M503.0,100.9L507.5,101.5M497.6,108.7L502.0,109.3M492.1,116.6L496.5,117.3M566.5,17.0L570.8,17.3M561.7,23.9L566.0,24.2M556.8,30.9L561.2,31.3M551.9,38.0L556.3,38.4M546.9,45.2L551.3,45.6M541.9,52.4L546.3,52.8M536.8,59.8L541.2,60.2M531.7,67.2L536.1,67.6M526.5,74.7L531.0,75.1M521.3,82.2L525.7,82.7M516.0,89.9L520.4,90.4M510.7,97.6L515.1,98.2M505.2,105.4L509.7,106.0M499.8,113.3L504.2,114.0M494.2,121.3L498.7,122.0M568.9,20.8L573.3,21.1M564.1,27.8L568.5,28.1M559.2,34.9L563.6,35.2M554.3,42.0L558.7,42.4M549.3,49.2L553.7,49.6M544.3,56.6L548.7,57.0M539.2,63.9L543.6,64.4M534.0,71.4L538.5,71.9M528.9,79.0L533.3,79.5M523.6,86.6L528.1,87.1M518.3,94.3L522.8,94.9M512.9,102.1L517.4,102.7M507.5,110.0L512.0,110.6M502.0,118.0L506.5,118.7M576.2,17.6L580.6,17.9M571.4,24.6L575.8,24.9M566.5,31.7L571.0,32.0M561.7,38.8L566.1,39.2M556.7,46.0L561.2,46.4M551.7,53.3L556.2,53.8M546.7,60.7L551.1,61.2M541.6,68.2L546.0,68.6M536.4,75.7L540.9,76.2M531.2,83.3L535.7,83.9M525.9,91.1L530.4,91.6M520.6,98.8L525.1,99.4M515.2,106.7L519.7,107.3M509.7,114.7L514.3,115.3M504.2,122.8L508.7,123.4M578.7,21.5L583.1,21.8M573.9,28.5L578.3,28.8M569.0,35.6L573.5,36.0M564.1,42.8L568.6,43.2M559.2,50.1L563.6,50.5M554.2,57.5L558.6,57.9M549.1,64.9L553.6,65.4M544.0,72.5L548.5,72.9M538.8,80.1L543.3,80.6M533.6,87.8L538.1,88.3M528.3,95.5L532.8,96.1M522.9,103.4L527.4,104.0M517.5,111.4L522.0,112.0M512.0,119.4L516.6,120.1M586.0,18.3L590.5,18.6M581.2,25.3L585.7,25.6M576.4,32.4L580.9,32.8M571.5,39.6L576.0,40.0M566.6,46.9L571.1,47.3M561.7,54.3L566.2,54.7M556.6,61.7L561.2,62.1M551.5,69.2L556.1,69.7M546.4,76.8L550.9,77.3M541.2,84.5L545.8,85.0M536.0,92.2L540.5,92.8M530.6,100.1L535.2,100.7M525.3,108.0L529.8,108.6M519.8,116.1L524.4,116.7M514.3,124.2L518.9,124.9M588.6,22.1L593.1,22.4M583.8,29.2L588.3,29.6M579.0,36.4L583.5,36.8M574.1,43.7L578.6,44.1M569.2,51.0L573.7,51.4M564.2,58.4L568.7,58.9M559.1,65.9L563.7,66.4M554.0,73.5L558.6,74.0M548.9,81.2L553.4,81.7M543.7,88.9L548.2,89.5M538.4,96.8L543.0,97.3M533.0,104.7L537.7,105.3M527.6,112.7L532.3,113.3M522.2,120.8L526.8,121.5M595.9,18.9L600.5,19.2M591.2,26.0L595.7,26.4M586.4,33.2L591.0,33.5M581.6,40.4L586.1,40.8M576.7,47.8L581.2,48.2M571.7,55.2L576.3,55.6M566.7,62.7L571.3,63.1M561.7,70.2L566.3,70.7M556.5,77.9L561.1,78.4M551.4,85.6L556.0,86.1M546.1,93.5L550.8,94.0M540.8,101.4L545.5,101.9M535.5,109.4L540.1,110.0M530.1,117.5L534.7,118.1M524.6,125.7L529.2,126.3M598.6,22.8L603.2,23.1M593.9,30.0L598.4,30.3M589.1,37.2L593.6,37.6M584.2,44.5L588.8,44.9M579.3,51.9L583.9,52.3M574.3,59.4L578.9,59.8M569.3,66.9L573.9,67.4M564.2,74.6L568.9,75.1M559.1,82.3L563.7,82.8M553.9,90.1L558.5,90.7M548.6,98.0L553.3,98.6M543.3,106.0L548.0,106.6M537.9,114.1L542.6,114.7M532.5,122.3L537.2,122.9M606.0,19.6L610.6,19.9M601.3,26.8L605.9,27.1M596.6,34.0L601.2,34.3M591.7,41.3L596.3,41.6M586.9,48.6L591.5,49.0M581.9,56.1L586.6,56.5M576.9,63.6L581.6,64.1M571.9,71.3L576.6,71.8M566.8,79.0L571.5,79.5M561.7,86.8L566.3,87.3M556.4,94.7L561.1,95.2M551.2,102.7L555.9,103.2M545.8,110.7L550.6,111.3M540.4,118.9L545.2,119.5M535.0,127.2L539.7,127.8M608.8,23.5L613.4,23.8M604.1,30.7L608.7,31.1M599.3,38.0L603.9,38.4M594.4,45.4L599.1,45.8M589.5,52.8L594.2,53.2M584.6,60.4L589.3,60.8M579.6,68.0L584.3,68.4M574.6,75.7L579.2,76.2M569.4,83.5L574.1,84.0M564.3,91.3L569.0,91.9M559.0,99.3L563.8,99.9M553.7,107.4L558.5,108.0M548.4,115.5L553.1,116.1M543.0,123.7L547.7,124.4M616.3,20.3L620.9,20.6M611.6,27.5L616.2,27.8M606.8,34.8L611.5,35.1M602.0,42.1L606.7,42.5M597.2,49.5L601.9,49.9M592.3,57.1L597.0,57.5M587.3,64.7L592.0,65.1M582.3,72.3L587.0,72.8M577.2,80.1L582.0,80.6M572.1,88.0L576.8,88.5M566.9,95.9L571.7,96.5M561.7,104.0L566.4,104.6M556.4,112.1L561.1,112.7M551.0,120.3L555.8,121.0M545.5,128.7L550.3,129.3M619.1,24.2L623.8,24.6M614.4,31.5L619.1,31.8M609.6,38.8L614.3,39.2M604.8,46.2L609.5,46.6M599.9,53.7L604.7,54.2M595.0,61.3L599.8,61.8M590.1,69.0L594.8,69.5M585.0,76.8L589.8,77.3M579.9,84.6L584.7,85.1M574.8,92.5L579.6,93.1M569.6,100.6L574.4,101.2M564.3,108.7L569.1,109.3M559.0,116.9L563.8,117.6M553.6,125.2L558.4,125.9M626.6,21.0L631.3,21.3M622.0,28.2L626.7,28.6M617.2,35.5L622.0,35.9M612.5,43.0L617.2,43.3M607.6,50.4L612.4,50.9M602.8,58.0L607.5,58.4M597.8,65.7L602.6,66.1M592.8,73.4L597.6,73.9M587.8,81.2L592.6,81.8M582.7,89.2L587.5,89.7M577.5,97.2L582.3,97.8M572.3,105.3L577.1,105.9M567.0,113.5L571.9,114.1M561.7,121.8L566.5,122.5M556.3,130.2L561.1,130.9M629.5,25.0L634.3,25.3M624.8,32.3L629.6,32.6M620.1,39.7L624.9,40.0M615.3,47.1L620.1,47.5M610.5,54.7L615.3,55.1M605.6,62.3L610.4,62.8M600.7,70.1L605.5,70.5M595.6,77.9L600.5,78.4M590.6,85.8L595.4,86.3M585.5,93.8L590.3,94.3M580.3,101.9L585.1,102.5M575.0,110.1L579.9,110.7M569.7,118.3L574.6,119.0M564.4,126.7L569.3,127.4M637.1,21.7L641.9,22.0M632.5,29.0L637.3,29.3M627.8,36.4L632.6,36.7M623.0,43.8L627.8,44.2M618.2,51.4L623.1,51.8M613.4,59.0L618.2,59.4M608.5,66.7L613.3,67.2M603.5,74.5L608.4,75.0M598.5,82.4L603.4,82.9M593.4,90.4L598.3,90.9M588.3,98.5L593.2,99.0M583.1,106.6L588.0,107.2M577.8,114.9L582.7,115.5M572.5,123.3L577.4,123.9M567.1,131.7L572.1,132.4M640.1,25.7L644.9,26.0M635.5,33.0L640.3,33.4M630.8,40.5L635.6,40.9M626.0,48.0L630.8,48.4M621.2,55.6L626.0,56.1M616.3,63.3L621.2,63.8M611.4,71.1L616.3,71.6M606.4,79.0L611.3,79.5M601.4,87.0L606.3,87.5M596.3,95.0L601.2,95.6M591.1,103.2L596.1,103.8M585.9,111.4L590.9,112.1M580.6,119.8L585.6,120.5M575.3,128.3L580.3,128.9M647.8,22.4L652.6,22.7M643.1,29.7L648.0,30.1M638.5,37.2L643.3,37.5M633.8,44.7L638.6,45.1M629.0,52.3L633.9,52.7M624.2,60.0L629.1,60.4M619.3,67.7L624.2,68.2M614.3,75.6L619.3,76.1M609.4,83.6L614.3,84.1M604.3,91.6L609.3,92.2M599.2,99.8L604.2,100.3M594.0,108.0L599.0,108.6M588.8,116.3L593.8,117.0M583.5,124.8L588.5,125.4M578.1,133.3L583.1,134.0M650.8,26.4L655.7,26.8M646.2,33.8L651.1,34.2M641.5,41.3L646.4,41.7M636.8,48.9L641.7,49.3M632.0,56.6L636.9,57.0M627.2,64.4L632.1,64.8M622.3,72.2L627.2,72.7M617.3,80.2L622.3,80.7M612.3,88.2L617.3,88.7M607.3,96.3L612.3,96.9M602.1,104.5L607.1,105.1M596.9,112.9L602.0,113.5M591.7,121.3L596.7,121.9M586.4,129.8L591.4,130.5M658.5,23.1L663.4,23.4M653.9,30.5L658.9,30.9M649.3,38.0L654.2,38.4M644.6,45.6L649.6,46.0M639.9,53.2L644.8,53.7M635.1,61.0L640.1,61.4M630.2,68.8L635.2,69.3M625.3,76.7L630.3,77.2M620.4,84.7L625.4,85.3M615.3,92.9L620.4,93.4M610.3,101.1L615.3,101.7M605.1,109.4L610.2,110.0M599.9,117.8L605.0,118.4M594.6,126.3L599.7,127.0M589.3,134.9L594.4,135.6M661.7,27.2L666.6,27.5M657.1,34.6L662.1,35.0M652.5,42.2L657.4,42.6M647.8,49.8L652.7,50.3M643.0,57.6L648.0,58.0M638.2,65.4L643.2,65.9M633.3,73.3L638.4,73.8M628.4,81.3L633.4,81.8M623.4,89.4L628.5,90.0M618.4,97.6L623.5,98.2M613.3,105.9L618.4,106.5M608.1,114.3L613.2,114.9M602.9,122.8L608.0,123.5M597.6,131.4L602.8,132.1M669.5,23.8L674.4,24.2M664.9,31.3L669.9,31.6M660.3,38.8L665.3,39.2M655.6,46.5L660.7,46.9M650.9,54.2L656.0,54.6M646.2,62.0L651.2,62.4M641.3,69.9L646.4,70.4M636.5,77.9L641.5,78.4M631.5,86.0L636.6,86.5M626.5,94.1L631.6,94.7M621.5,102.4L626.6,103.0M616.4,110.8L621.5,111.4M611.2,119.3L616.3,119.9M606.0,127.8L611.1,128.5M600.7,136.5L605.8,137.2M672.7,27.9L677.7,28.3M668.2,35.5L673.2,35.8M663.5,43.1L668.6,43.5M658.9,50.8L663.9,51.2M654.2,58.6L659.2,59.0M649.4,66.4L654.5,66.9M644.5,74.4L649.6,74.9M639.6,82.5L644.8,83.0M634.7,90.7L639.8,91.2M629.7,98.9L634.8,99.5M624.6,107.3L629.8,107.9M619.5,115.7L624.7,116.4M614.3,124.3L619.5,125.0M609.1,133.0L614.2,133.7M680.5,24.6L685.6,24.9M676.0,32.1L681.1,32.4M671.4,39.7L676.5,40.1M666.8,47.4L671.9,47.8M662.1,55.1L667.2,55.6M657.4,63.0L662.5,63.5M652.6,71.0L657.7,71.5M647.8,79.0L652.9,79.5M642.9,87.2L648.0,87.7M637.9,95.4L643.1,96.0M632.9,103.8L638.1,104.4M627.8,112.2L633.0,112.8M622.7,120.7L627.9,121.4M617.5,129.4L622.7,130.1M612.2,138.2L617.4,138.9M683.9,28.7L689.0,29.0M679.4,36.3L684.5,36.7M674.8,44.0L679.9,44.4M670.1,51.7L675.3,52.1M665.5,59.6L670.6,60.0M660.7,67.5L665.9,68.0M655.9,75.6L661.1,76.1M651.0,83.7L656.2,84.2M646.1,91.9L651.3,92.5M641.2,100.2L646.4,100.8M636.1,108.7L641.3,109.3M631.0,117.2L636.3,117.9M625.9,125.8L631.1,126.5M620.6,134.6L625.9,135.3M691.8,25.3L696.9,25.7M687.3,32.9L692.4,33.2M682.7,40.5L687.9,40.9M678.2,48.3L683.3,48.7M673.5,56.1L678.7,56.6M668.8,64.1L674.0,64.5M664.0,72.1L669.2,72.6M659.2,80.2L664.4,80.7M654.4,88.4L659.6,89.0M649.4,96.7L654.7,97.3M644.4,105.1L649.7,105.8M639.4,113.6L644.7,114.3M634.3,122.3L639.6,123.0M629.1,131.0L634.4,131.7M623.9,139.8L629.2,140.6M695.2,29.5L700.4,29.8M690.7,37.1L695.9,37.5M686.2,44.9L691.4,45.3M681.6,52.7L686.8,53.1M676.9,60.6L682.1,61.1M672.2,68.6L677.4,69.1M667.4,76.7L672.7,77.2M662.6,84.9L667.9,85.4M657.7,93.2L663.0,93.8M652.8,101.6L658.1,102.2M647.8,110.1L653.1,110.7M642.7,118.7L648.0,119.4M637.6,127.4L642.9,128.1M632.4,136.2L637.8,137.0M703.2,26.1L708.3,26.4M698.7,33.7L703.9,34.1M694.2,41.4L699.4,41.8M689.6,49.2L694.9,49.6M685.0,57.1L690.3,57.6M680.4,65.1L685.6,65.6M675.6,73.2L680.9,73.7M670.9,81.4L676.2,81.9M666.0,89.7L671.3,90.2M661.1,98.0L666.5,98.6M656.2,106.5L661.5,107.2M651.2,115.1L656.5,115.8M646.1,123.8L651.5,124.5M640.9,132.6L646.3,133.3M635.7,141.5L641.1,142.3M706.7,30.3L711.9,30.6M702.2,38.0L707.5,38.4M697.7,45.8L703.0,46.2M693.2,53.6L698.4,54.1M688.5,61.6L693.8,62.1M683.9,69.7L689.2,70.2M679.1,77.9L684.4,78.4M674.3,86.1L679.7,86.7M669.5,94.5L674.8,95.1M664.6,103.0L670.0,103.6M659.6,111.5L665.0,112.2M654.6,120.2L660.0,120.9M649.5,129.0L654.9,129.7M644.3,137.9L649.8,138.6M714.7,26.8L720.0,27.2M710.3,34.5L715.6,34.9M705.8,42.3L711.1,42.7M701.3,50.2L706.6,50.6M696.7,58.1L702.0,58.6M692.1,66.2L697.4,66.7M687.4,74.3L692.8,74.9M682.7,82.6L688.0,83.1M677.9,90.9L683.2,91.5M673.0,99.4L678.4,100.0M668.1,107.9L673.5,108.6M663.1,116.6L668.5,117.3M658.1,125.4L663.5,126.1M653.0,134.2L658.4,135.0M647.8,143.2L653.3,144.0M718.4,31.1L723.7,31.4M713.9,38.8L719.2,39.2M709.5,46.7L714.8,47.1M704.9,54.6L710.3,55.1M700.3,62.7L705.7,63.1M695.7,70.8L701.1,71.3M691.0,79.0L696.4,79.6M686.2,87.4L691.7,87.9M681.4,95.8L686.9,96.4M676.6,104.3L682.0,105.0M671.6,113.0L677.1,113.7M666.6,121.7L672.1,122.4M661.6,130.6L667.1,131.3M656.5,139.6L662.0,140.3M726.4,27.6L731.8,28.0M722.0,35.4L727.4,35.7M717.6,43.2L723.0,43.6M713.1,51.1L718.5,51.6M708.6,59.2L714.0,59.6M704.0,67.3L709.4,67.8M699.3,75.5L704.8,76.0M694.6,83.8L700.1,84.4M689.9,92.2L695.3,92.8M685.1,100.7L690.5,101.4M680.2,109.4L685.7,110.0M675.2,118.1L680.7,118.8M670.2,127.0L675.8,127.7M665.2,135.9L670.7,136.7M660.0,145.0L665.6,145.8M730.2,31.9L735.5,32.3M725.8,39.7L731.2,40.1M721.3,47.6L726.7,48.0M716.8,55.6L722.3,56.1M712.3,63.7L717.7,64.2M707.7,71.9L713.2,72.4M703.0,80.2L708.5,80.8M698.3,88.6L703.8,89.2M693.6,97.1L699.1,97.8M688.7,105.8L694.2,106.4M683.8,114.5L689.4,115.1M678.9,123.3L684.4,124.0M673.9,132.2L679.4,133.0M668.8,141.3L674.4,142.1M738.3,28.4L743.7,28.8M734.0,36.2L739.4,36.6M729.6,44.1L735.0,44.5M725.1,52.1L730.6,52.5M720.6,60.2L726.1,60.7M716.1,68.4L721.6,68.9M711.5,76.7L717.0,77.2M706.8,85.0L712.3,85.6M702.1,93.5L707.6,94.1M697.3,102.1L702.8,102.8M692.4,110.8L698.0,111.5M687.5,119.6L693.1,120.3M682.6,128.6L688.2,129.3M677.5,137.6L683.2,138.4M672.5,146.7L678.1,147.5M742.2,32.7L747.6,33.1M737.8,40.6L743.3,41.0M733.4,48.6L738.9,49.0M728.9,56.6L734.5,57.1M724.4,64.8L730.0,65.3M719.9,73.1L725.4,73.6M715.3,81.5L720.8,82.0M710.6,89.9L716.2,90.5M705.9,98.5L711.4,99.1M701.1,107.2L706.7,107.8M696.2,116.0L701.8,116.7M691.3,124.9L696.9,125.6M686.3,133.9L692.0,134.7M681.3,143.0L687.0,143.8M750.4,29.2L755.8,29.6M746.1,37.1L751.6,37.5M741.7,45.0L747.2,45.5M737.3,53.1L742.8,53.5M732.8,61.2L738.4,61.7M728.3,69.5L733.9,70.0M723.7,77.9L729.3,78.4M719.1,86.3L724.7,86.9M714.4,94.9L720.1,95.5M709.7,103.5L715.3,104.2M704.9,112.3L710.6,113.0M700.0,121.2L705.7,121.9M695.1,130.2L700.8,130.9M690.1,139.3L695.8,140.1M685.1,148.5L690.8,149.4M754.3,33.6L759.8,33.9M750.0,41.5L755.5,41.9M745.6,49.5L751.2,50.0M741.2,57.7L746.8,58.1M736.8,65.9L742.4,66.4M732.2,74.2L737.9,74.8M727.7,82.7L733.3,83.2M723.0,91.2L728.7,91.8M718.3,99.9L724.0,100.5M713.6,108.6L719.3,109.3M708.8,117.5L714.5,118.2M703.9,126.5L709.6,127.2M699.0,135.6L704.7,136.4M694.0,144.8L699.8,145.6M762.6,30.0L768.1,30.4M758.3,37.9L763.9,38.3M754.0,46.0L759.6,46.4M749.6,54.1L755.3,54.6M745.2,62.3L750.9,62.8M740.7,70.6L746.4,71.2M736.2,79.1L741.9,79.6M731.6,87.6L737.3,88.2M727.0,96.2L732.7,96.8M722.3,105.0L728.0,105.6M717.5,113.8L723.3,114.5M712.7,122.8L718.5,123.5M707.8,131.9L713.6,132.6M702.9,141.1L708.7,141.8M697.9,150.4L703.7,151.2M766.6,34.4L772.3,34.8M762.4,42.4L768.0,42.8M758.1,50.5L763.7,51.0M753.7,58.7L759.4,59.2M749.3,67.0L755.0,67.5M744.8,75.4L750.5,76.0M740.3,83.9L746.0,84.5M735.7,92.6L741.4,93.2M731.0,101.3L736.8,101.9M726.3,110.1L732.1,110.8M721.5,119.1L727.4,119.8M716.7,128.1L722.5,128.9M711.8,137.3L717.7,138.1M706.9,146.6L712.7,147.4M775.0,30.8L780.6,31.2M770.8,38.8L776.4,39.2M766.5,46.9L772.2,47.4M762.2,55.1L767.9,55.6M757.8,63.4L763.5,63.9M753.4,71.8L759.1,72.3M748.9,80.3L754.6,80.8M744.3,88.9L750.1,89.5M739.7,97.6L745.6,98.2M735.1,106.4L740.9,107.1M730.4,115.3L736.2,116.0M725.6,124.4L731.5,125.1M720.8,133.5L726.7,134.3M715.9,142.8L721.8,143.6M710.9,152.2L716.8,153.1M779.2,35.3L784.9,35.7M774.9,43.3L780.6,43.8M770.7,51.5L776.4,52.0M766.3,59.8L772.1,60.3M762.0,68.1L767.7,68.7M757.5,76.6L763.3,77.2M753.0,85.2L758.9,85.8M748.5,93.9L754.3,94.5M743.9,102.7L749.7,103.3M739.2,111.6L745.1,112.3M734.5,120.6L740.4,121.4M729.7,129.8L735.6,130.5M724.9,139.0L730.8,139.8M720.0,148.4L725.9,149.3M787.6,31.7L793.3,32.1M783.4,39.7L789.1,40.1M779.2,47.9L784.9,48.3M774.9,56.1L780.7,56.6M770.6,64.5L776.4,65.0M766.2,73.0L772.0,73.5M761.7,81.5L767.6,82.1M757.2,90.2L763.1,90.8M752.7,99.0L758.6,99.6M748.1,107.9L754.0,108.5M743.4,116.9L749.4,117.6M738.7,126.0L744.7,126.8M733.9,135.3L739.9,136.0M729.1,144.6L735.1,145.4M724.1,154.1L730.2,155.0M791.9,36.1L797.6,36.5M787.7,44.3L793.5,44.7M783.5,52.5L789.3,53.0M779.2,60.9L785.0,61.3M774.8,69.3L780.7,69.8M770.5,77.8L776.3,78.4M766.0,86.5L771.9,87.1M761.5,95.3L767.4,95.9M757.0,104.1L762.9,104.8M752.4,113.1L758.3,113.8M747.7,122.2L753.7,123.0M742.9,131.5L749.0,132.2M738.1,140.8L744.2,141.6M733.3,150.3L739.3,151.1M800.3,32.5L806.1,32.9M796.2,40.7L802.0,41.1M792.0,48.9L797.9,49.3M787.8,57.2L793.7,57.7M783.5,65.6L789.4,66.1M779.2,74.2L785.1,74.7M774.8,82.8L780.7,83.4M770.4,91.5L776.3,92.1M765.8,100.4L771.8,101.0M761.3,109.4L767.3,110.0M756.7,118.5L762.7,119.2M752.0,127.7L758.0,128.4M747.3,137.0L753.3,137.8M742.4,146.4L748.5,147.3M737.6,156.0L743.7,156.9" stroke="#5e2410" stroke-width="1.4" stroke-opacity="0.75"/>
</g>
<polygon points="262.1,92.0 343.3,-0.9 808.5,28.9 741.6,161.8" fill="none" stroke="#000" stroke-width="1.8" stroke-linejoin="round" />
<clipPath id="cpGable"><polygon points="808.5,28.9 848.1,102.8 741.6,161.8"/></clipPath>
<polygon points="808.5,28.9 848.1,102.8 741.6,161.8" fill="#904526" stroke="#000" stroke-width="1.4" stroke-linejoin="round" />
<g clip-path="url(#cpGable)" fill="none">
<path d="M744.3,160.3 L808.5,28.9 M746.9,158.9 L808.5,28.9 M749.6,157.4 L808.5,28.9 M752.2,155.9 L808.5,28.9 M754.9,154.4 L808.5,28.9 M757.6,153.0 L808.5,28.9 M760.2,151.5 L808.5,28.9 M762.9,150.0 L808.5,28.9 M765.6,148.5 L808.5,28.9 M768.2,147.1 L808.5,28.9 M770.9,145.6 L808.5,28.9 M773.6,144.1 L808.5,28.9 M776.2,142.6 L808.5,28.9 M778.9,141.2 L808.5,28.9 M781.5,139.7 L808.5,28.9 M784.2,138.2 L808.5,28.9 M786.9,136.7 L808.5,28.9 M789.5,135.2 L808.5,28.9 M792.2,133.8 L808.5,28.9 M794.9,132.3 L808.5,28.9 M797.5,130.8 L808.5,28.9 M800.2,129.3 L808.5,28.9 M802.8,127.9 L808.5,28.9 M805.5,126.4 L808.5,28.9 M808.2,124.9 L808.5,28.9 M810.8,123.5 L808.5,28.9 M813.5,122.0 L808.5,28.9 M816.1,120.5 L808.5,28.9 M818.8,119.0 L808.5,28.9 M821.5,117.5 L808.5,28.9 M824.1,116.1 L808.5,28.9 M826.8,114.6 L808.5,28.9 M829.5,113.1 L808.5,28.9 M832.1,111.7 L808.5,28.9 M834.8,110.2 L808.5,28.9 M837.5,108.7 L808.5,28.9 M840.1,107.2 L808.5,28.9 M842.8,105.8 L808.5,28.9 M845.4,104.3 L808.5,28.9" stroke="#6e2b12" stroke-width="0.7" stroke-opacity="0.55"/>
</g>
<polygon points="808.5,28.9 848.1,102.8 741.6,161.8" fill="none" stroke="#000" stroke-width="1.8" stroke-linejoin="round" />
<line x1="263.0" y1="10.0" x2="272.3" y2="101.0" stroke="#0000c8" stroke-width="1.3" />
<rect x="0" y="0" width="991" height="9" fill="#f0f0f0"/>
<rect x="0" y="8.5" width="991" height="1.2" fill="#fafafa"/>
<rect x="0" y="9.6" width="987" height="1.0" fill="#8e8e8e"/>
<rect x="0" y="10.6" width="987" height="0.9" fill="#626262"/>
<rect x="987" y="9.6" width="2.2" height="526" fill="#ffffff"/>
<rect x="989.2" y="9.6" width="2" height="526" fill="#f0f0f0"/>
<rect x="986.3" y="11" width="0.8" height="524" fill="#bebfba"/>
<path d="M0,0 L2.5,0 L1,2.2 L0,2.5 Z" fill="#111"/>
<path d="M17.5,0 Q20,2.6 24,2.2" fill="none" stroke="#2b2b2b" stroke-width="1.6"/>
<path d="M25.5,0 L25.5,2 Q25.5,4.6 28.5,4.6 L35.5,4.6 Q38.8,4.6 38.8,2 L38.8,0" fill="none" stroke="#4a4a4a" stroke-width="1.6"/>
<rect x="45.0" y="0" width="1" height="5.6" fill="#8a8a8a"/>
<rect x="121.0" y="0" width="1" height="5.6" fill="#8a8a8a"/>
<rect x="55" y="1.8" width="26" height="1.7" fill="#222"/>
<rect x="89" y="1.9" width="26" height="1.5" fill="#b0b0b0"/>
<path d="M130.7,0 L130.7,2 L157.3,2 L157.3,0" fill="none" stroke="#222" stroke-width="1.6"/>
<path d="M165.7,0 L165.7,2 L187.3,2 L187.3,0" fill="none" stroke="#a2a2a2" stroke-width="1.5"/>
<path d="M199.7,0 L199.7,2 L221.3,2 L221.3,0" fill="none" stroke="#bcbcbc" stroke-width="1.5"/>
<path d="M233.8,0 L233.8,2.6 L239,2.6" fill="none" stroke="#b5b5b5" stroke-width="1.5"/>
<path d="M253,2.6 L258,2.6 L258,0" fill="none" stroke="#b5b5b5" stroke-width="1.5"/>
<rect x="264.0" y="0" width="1" height="9" fill="#a8a8a8"/>
<rect x="265.0" y="0" width="1" height="9" fill="#ffffff"/>
<line x1="270.0" y1="0.5" x2="270.0" y2="8" stroke="#9c9c9c" stroke-width="1.2" stroke-dasharray="1 1.6"/>
<rect x="445.5" y="0" width="1" height="9" fill="#a8a8a8"/>
<rect x="446.5" y="0" width="1" height="9" fill="#ffffff"/>
<line x1="451.5" y1="0.5" x2="451.5" y2="8" stroke="#9c9c9c" stroke-width="1.2" stroke-dasharray="1 1.6"/>
<rect x="695.5" y="0" width="1" height="9" fill="#a8a8a8"/>
<rect x="696.5" y="0" width="1" height="9" fill="#ffffff"/>
<line x1="701.5" y1="0.5" x2="701.5" y2="8" stroke="#9c9c9c" stroke-width="1.2" stroke-dasharray="1 1.6"/>
<rect x="291.3" y="0" width="1.6" height="3.4" fill="#222"/>
<path d="M319,0 L328,3.2 L337,0" fill="none" stroke="#9c9c9c" stroke-width="1.5"/>
<path d="M352,0 L362,3.8 L371.5,0 Z" fill="#3a3a3a"/>
<path d="M381,0 Q394,7.6 407,0" fill="none" stroke="#c4c4c4" stroke-width="1.4"/>
<path d="M419,0 Q428,5.2 436,1.6 L439,3.4 L440,0" fill="none" stroke="#bcbcbc" stroke-width="1.4"/>
<path d="M471,0 L477.4,0 L474.2,3.3 Z" fill="#c06a1e"/>
<path d="M498,0 Q508,7.8 518.5,0" fill="none" stroke="#c06a1e" stroke-width="1.6"/>
<path d="M530.5,0 Q543.5,7.2 557,0" fill="none" stroke="#c06a1e" stroke-width="1.6"/>
<path d="M531,0.4 L556.5,0.4" fill="none" stroke="#c06a1e" stroke-width="1.0"/>
<rect x="575.2" y="0" width="1.6" height="4.6" fill="#c06a1e"/>
<path d="M602.5,0 L600,2.2 M609.5,0 L609.5,1.6 M617.5,0 L620.5,2.4" fill="none" stroke="#c06a1e" stroke-width="1.6"/>
<path d="M633,0 Q644,4.6 655.5,0" fill="none" stroke="#c06a1e" stroke-width="1.8"/>
<path d="M667,0 Q677.5,8 688.5,0" fill="none" stroke="#bdbdbd" stroke-width="1.5"/>
<rect x="724" y="0" width="14" height="4.6" fill="#8f8f8f"/>
<rect x="758" y="0" width="14" height="4.6" fill="#8f8f8f"/>
<rect x="777" y="0" width="1" height="5.6" fill="#555"/>
<path d="M787.8,0 L787.8,2.9 L792,2.9 L795,0 M792,2.9 L812.5,2.9 L812.5,0" fill="none" stroke="#b9b9b9" stroke-width="1.4"/>
<path d="M822,0 L834,4 L846,0 M834,0 L834,4" fill="none" stroke="#a9a9a9" stroke-width="1.4"/>
<path d="M856,0 L868,4 L880,0 M868,0 L868,4" fill="none" stroke="#a9a9a9" stroke-width="1.4"/>
<path d="M893,0 Q902,5.6 911,0 M902,1 L905,0" fill="none" stroke="#b4b4b4" stroke-width="1.4"/>
<path d="M927,0 Q936,5.6 945,0 M936,1 L939,0" fill="none" stroke="#b4b4b4" stroke-width="1.4"/>
<rect x="955" y="0" width="1" height="5.6" fill="#6a6a6a"/>
<path d="M977.8,0 L977.8,0.6 Q977.8,4.2 982,4.2 L991,4.2" fill="none" stroke="#141414" stroke-width="2.8"/>
</svg>
</body>
</html>
